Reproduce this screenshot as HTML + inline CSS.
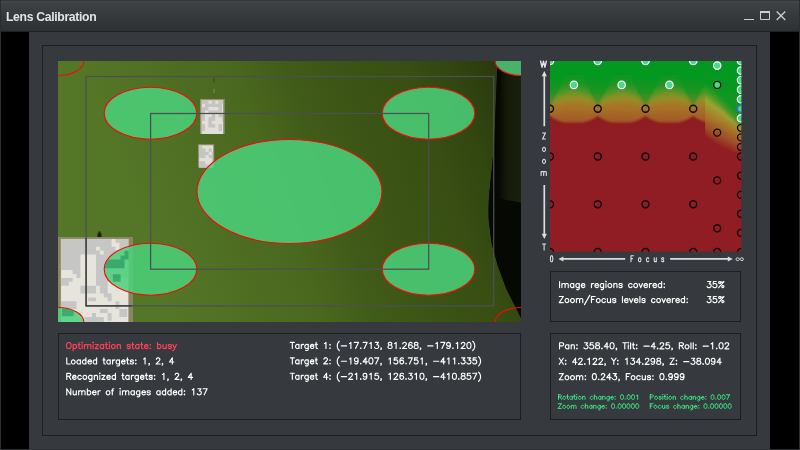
<!DOCTYPE html>
<html><head><meta charset="utf-8"><title>Lens Calibration</title>
<style>
html,body{margin:0;padding:0;background:#2b2e31;}
#bk{position:absolute;left:1px;top:32px;width:798px;height:417px;background:#000;}
body{width:800px;height:450px;position:relative;overflow:hidden;font-family:"Liberation Sans",sans-serif;}
#tb{position:absolute;left:1px;top:0;width:798px;height:32px;background:linear-gradient(#34373a 0px,#34373a 1px,#43474a 1px,#3d4144 4px,#36393c 16px,#2e3134 30px,#2a2d30 31px,#1f2224 31px,#1f2224 32px);}
#ttl{position:absolute;left:6.1px;top:10px;font-size:12.2px;font-weight:bold;color:#e4e4e4;letter-spacing:-0.32px;line-height:14px;white-space:nowrap;will-change:transform;}
#pn{position:absolute;left:29px;top:32px;width:741px;height:417px;background:#363a3e;}
.bx{position:absolute;border:1px solid #1f1e1f;box-sizing:border-box;}
svg{position:absolute;left:0;top:0;}
</style></head><body>
<div id="bk"></div>
<div id="tb"></div>
<div id="ttl">Lens Calibration</div>
<div id="pn"></div>
<div class="bx" style="left:42px;top:45px;width:715px;height:391px"></div>
<div class="bx" style="left:58px;top:333px;width:463px;height:87px"></div>
<div class="bx" style="left:550px;top:271px;width:191px;height:51px"></div>
<div class="bx" style="left:550px;top:333px;width:191px;height:87px"></div>
<svg width="800" height="450" viewBox="0 0 800 450">
<defs>
<clipPath id="ci"><rect x="58" y="61" width="463" height="261"/></clipPath>
<linearGradient id="gbg" gradientUnits="userSpaceOnUse" x1="60" y1="190" x2="487.6" y2="40.3"><stop offset="0.000" stop-color="#547627"/><stop offset="0.146" stop-color="#547627"/><stop offset="0.458" stop-color="#4a671e"/><stop offset="0.562" stop-color="#415b19"/><stop offset="0.677" stop-color="#3c5415"/><stop offset="0.812" stop-color="#384e13"/><stop offset="0.906" stop-color="#324610"/><stop offset="1.000" stop-color="#2b390e"/></linearGradient>
<clipPath id="ce"><ellipse cx="150.5" cy="269.2" rx="45.8" ry="25.5"/><ellipse cx="58" cy="322" rx="25.3" ry="14"/></clipPath>
<linearGradient id="gdk" gradientUnits="userSpaceOnUse" x1="494" y1="0" x2="521" y2="0"><stop offset="0" stop-color="#040602"/><stop offset="0.2" stop-color="#070a04"/><stop offset="0.5" stop-color="#151b0a"/><stop offset="1" stop-color="#1a200d"/></linearGradient>
</defs>
<g clip-path="url(#ci)">
<rect x="58" y="61" width="463" height="261" fill="url(#gbg)"/>
<path d="M497.6 61L521 61L521 318L518.2 312.6L512.4 301L506.6 289.4L498 266.3L491.6 243L488.8 220L488.6 210L488.9 200L490.7 180L492.7 160L494.4 140L496 100L497 76Z" fill="url(#gdk)"/>
<path d="M497.6 61L501.5 61L499 100L498 140L496 180L494.2 197.8L521 202.7L521 318L518.2 312.6L512.4 301L506.6 289.4L498 266.3L491.6 243L488.8 220L488.6 210L488.9 200L490.7 180L492.7 160L494.4 140L496 100L497 76Z" fill="#050803"/>
<rect x="58" y="237" width="75" height="86" fill="#8b8562"/><rect x="60.9" y="238.9" width="67.5" height="84.1" fill="#e7e4dc"/><path d="M60.9 238.9h3.9v3.9h-3.9zM64.8 238.9h3.9v3.9h-3.9zM68.7 238.9h3.9v3.9h-3.9zM72.6 238.9h3.9v3.9h-3.9zM76.5 238.9h3.9v3.9h-3.9zM80.4 238.9h3.9v3.9h-3.9zM84.3 238.9h3.9v3.9h-3.9zM88.2 238.9h3.9v3.9h-3.9zM92.1 238.9h3.9v3.9h-3.9zM96.0 238.9h3.9v3.9h-3.9zM99.9 238.9h3.9v3.9h-3.9zM103.8 238.9h3.9v3.9h-3.9zM107.7 238.9h3.9v3.9h-3.9zM115.5 238.9h3.9v3.9h-3.9zM119.4 238.9h3.9v3.9h-3.9zM123.3 238.9h3.9v3.9h-3.9zM127.2 238.9h1.2v3.9h-1.2zM60.9 242.8h3.9v3.9h-3.9zM64.8 242.8h3.9v3.9h-3.9zM68.7 242.8h3.9v3.9h-3.9zM72.6 242.8h3.9v3.9h-3.9zM76.5 242.8h3.9v3.9h-3.9zM80.4 242.8h3.9v3.9h-3.9zM84.3 242.8h3.9v3.9h-3.9zM88.2 242.8h3.9v3.9h-3.9zM92.1 242.8h3.9v3.9h-3.9zM96.0 242.8h3.9v3.9h-3.9zM99.9 242.8h3.9v3.9h-3.9zM103.8 242.8h3.9v3.9h-3.9zM107.7 242.8h3.9v3.9h-3.9zM119.4 242.8h3.9v3.9h-3.9zM123.3 242.8h3.9v3.9h-3.9zM127.2 242.8h1.2v3.9h-1.2zM60.9 246.7h3.9v3.9h-3.9zM64.8 246.7h3.9v3.9h-3.9zM68.7 246.7h3.9v3.9h-3.9zM72.6 246.7h3.9v3.9h-3.9zM76.5 246.7h3.9v3.9h-3.9zM80.4 246.7h3.9v3.9h-3.9zM84.3 246.7h3.9v3.9h-3.9zM88.2 246.7h3.9v3.9h-3.9zM92.1 246.7h3.9v3.9h-3.9zM99.9 246.7h3.9v3.9h-3.9zM103.8 246.7h3.9v3.9h-3.9zM107.7 246.7h3.9v3.9h-3.9zM111.6 246.7h3.9v3.9h-3.9zM119.4 246.7h3.9v3.9h-3.9zM123.3 246.7h3.9v3.9h-3.9zM127.2 246.7h1.2v3.9h-1.2zM60.9 250.6h3.9v3.9h-3.9zM64.8 250.6h3.9v3.9h-3.9zM68.7 250.6h3.9v3.9h-3.9zM72.6 250.6h3.9v3.9h-3.9zM76.5 250.6h3.9v3.9h-3.9zM80.4 250.6h3.9v3.9h-3.9zM84.3 250.6h3.9v3.9h-3.9zM88.2 250.6h3.9v3.9h-3.9zM92.1 250.6h3.9v3.9h-3.9zM96.0 250.6h3.9v3.9h-3.9zM103.8 250.6h3.9v3.9h-3.9zM107.7 250.6h3.9v3.9h-3.9zM111.6 250.6h3.9v3.9h-3.9zM115.5 250.6h3.9v3.9h-3.9zM119.4 250.6h3.9v3.9h-3.9zM123.3 250.6h3.9v3.9h-3.9zM127.2 250.6h1.2v3.9h-1.2zM60.9 254.5h3.9v3.9h-3.9zM64.8 254.5h3.9v3.9h-3.9zM68.7 254.5h3.9v3.9h-3.9zM72.6 254.5h3.9v3.9h-3.9zM76.5 254.5h3.9v3.9h-3.9zM96.0 254.5h3.9v3.9h-3.9zM99.9 254.5h3.9v3.9h-3.9zM103.8 254.5h3.9v3.9h-3.9zM107.7 254.5h3.9v3.9h-3.9zM111.6 254.5h3.9v3.9h-3.9zM115.5 254.5h3.9v3.9h-3.9zM119.4 254.5h3.9v3.9h-3.9zM123.3 254.5h3.9v3.9h-3.9zM127.2 254.5h1.2v3.9h-1.2zM60.9 258.4h3.9v3.9h-3.9zM64.8 258.4h3.9v3.9h-3.9zM68.7 258.4h3.9v3.9h-3.9zM72.6 258.4h3.9v3.9h-3.9zM76.5 258.4h3.9v3.9h-3.9zM96.0 258.4h3.9v3.9h-3.9zM99.9 258.4h3.9v3.9h-3.9zM103.8 258.4h3.9v3.9h-3.9zM107.7 258.4h3.9v3.9h-3.9zM111.6 258.4h3.9v3.9h-3.9zM115.5 258.4h3.9v3.9h-3.9zM119.4 258.4h3.9v3.9h-3.9zM123.3 258.4h3.9v3.9h-3.9zM127.2 258.4h1.2v3.9h-1.2zM60.9 262.3h3.9v3.9h-3.9zM64.8 262.3h3.9v3.9h-3.9zM68.7 262.3h3.9v3.9h-3.9zM72.6 262.3h3.9v3.9h-3.9zM76.5 262.3h3.9v3.9h-3.9zM96.0 262.3h3.9v3.9h-3.9zM99.9 262.3h3.9v3.9h-3.9zM103.8 262.3h3.9v3.9h-3.9zM107.7 262.3h3.9v3.9h-3.9zM111.6 262.3h3.9v3.9h-3.9zM115.5 262.3h3.9v3.9h-3.9zM119.4 262.3h3.9v3.9h-3.9zM123.3 262.3h3.9v3.9h-3.9zM127.2 262.3h1.2v3.9h-1.2zM60.9 266.2h3.9v3.9h-3.9zM64.8 266.2h3.9v3.9h-3.9zM68.7 266.2h3.9v3.9h-3.9zM72.6 266.2h3.9v3.9h-3.9zM76.5 266.2h3.9v3.9h-3.9zM96.0 266.2h3.9v3.9h-3.9zM99.9 266.2h3.9v3.9h-3.9zM103.8 266.2h3.9v3.9h-3.9zM107.7 266.2h3.9v3.9h-3.9zM111.6 266.2h3.9v3.9h-3.9zM115.5 266.2h3.9v3.9h-3.9zM119.4 266.2h3.9v3.9h-3.9zM123.3 266.2h3.9v3.9h-3.9zM127.2 266.2h1.2v3.9h-1.2zM72.6 270.1h3.9v3.9h-3.9zM76.5 270.1h3.9v3.9h-3.9zM96.0 270.1h3.9v3.9h-3.9zM99.9 270.1h3.9v3.9h-3.9zM103.8 270.1h3.9v3.9h-3.9zM107.7 270.1h3.9v3.9h-3.9zM111.6 270.1h3.9v3.9h-3.9zM115.5 270.1h3.9v3.9h-3.9zM119.4 270.1h3.9v3.9h-3.9zM123.3 270.1h3.9v3.9h-3.9zM127.2 270.1h1.2v3.9h-1.2zM76.5 274.0h3.9v3.9h-3.9zM96.0 274.0h3.9v3.9h-3.9zM99.9 274.0h3.9v3.9h-3.9zM103.8 274.0h3.9v3.9h-3.9zM107.7 274.0h3.9v3.9h-3.9zM111.6 274.0h3.9v3.9h-3.9zM115.5 274.0h3.9v3.9h-3.9zM119.4 274.0h3.9v3.9h-3.9zM123.3 274.0h3.9v3.9h-3.9zM127.2 274.0h1.2v3.9h-1.2zM60.9 277.9h3.9v3.9h-3.9zM64.8 277.9h3.9v3.9h-3.9zM68.7 277.9h3.9v3.9h-3.9zM96.0 277.9h3.9v3.9h-3.9zM99.9 277.9h3.9v3.9h-3.9zM103.8 277.9h3.9v3.9h-3.9zM107.7 277.9h3.9v3.9h-3.9zM60.9 281.8h3.9v3.9h-3.9zM64.8 281.8h3.9v3.9h-3.9zM96.0 281.8h3.9v3.9h-3.9zM99.9 281.8h3.9v3.9h-3.9zM103.8 281.8h3.9v3.9h-3.9zM80.4 285.7h3.9v3.9h-3.9zM84.3 285.7h3.9v3.9h-3.9zM88.2 285.7h3.9v3.9h-3.9zM92.1 285.7h3.9v3.9h-3.9zM99.9 285.7h3.9v3.9h-3.9zM103.8 285.7h3.9v3.9h-3.9zM80.4 289.6h3.9v3.9h-3.9zM84.3 289.6h3.9v3.9h-3.9zM88.2 289.6h3.9v3.9h-3.9zM92.1 289.6h3.9v3.9h-3.9zM99.9 289.6h3.9v3.9h-3.9zM103.8 289.6h3.9v3.9h-3.9zM103.8 293.5h3.9v3.9h-3.9zM107.7 293.5h3.9v3.9h-3.9zM88.2 297.4h3.9v3.9h-3.9zM92.1 297.4h3.9v3.9h-3.9zM107.7 297.4h3.9v3.9h-3.9zM60.9 301.3h3.9v3.9h-3.9zM64.8 301.3h3.9v3.9h-3.9zM68.7 301.3h3.9v3.9h-3.9zM72.6 301.3h3.9v3.9h-3.9zM115.5 301.3h3.9v3.9h-3.9zM60.9 305.2h3.9v3.9h-3.9zM64.8 305.2h3.9v3.9h-3.9zM68.7 305.2h3.9v3.9h-3.9zM72.6 305.2h3.9v3.9h-3.9zM115.5 305.2h3.9v3.9h-3.9zM99.9 309.1h3.9v3.9h-3.9zM103.8 309.1h3.9v3.9h-3.9zM119.4 309.1h3.9v3.9h-3.9zM123.3 309.1h3.9v3.9h-3.9zM92.1 313.0h3.9v3.9h-3.9zM107.7 313.0h3.9v3.9h-3.9zM119.4 313.0h3.9v3.9h-3.9zM123.3 313.0h3.9v3.9h-3.9zM84.3 316.9h3.9v3.9h-3.9zM88.2 316.9h3.9v3.9h-3.9zM92.1 316.9h3.9v3.9h-3.9zM96.0 316.9h3.9v3.9h-3.9zM99.9 316.9h3.9v3.9h-3.9zM107.7 316.9h3.9v3.9h-3.9zM84.3 320.8h3.9v2.2h-3.9zM88.2 320.8h3.9v2.2h-3.9zM92.1 320.8h3.9v2.2h-3.9zM96.0 320.8h3.9v2.2h-3.9zM99.9 320.8h3.9v2.2h-3.9z" fill="#c6c6c4"/>
<rect x="200" y="99" width="24.7" height="35" fill="#979176"/><rect x="201.6" y="100.3" width="21.5" height="33.7" fill="#e1dfd9"/><path d="M201.6 100.3h3.4v3.4h-3.4zM205.0 100.3h3.4v3.4h-3.4zM211.8 100.3h3.4v3.4h-3.4zM218.6 100.3h3.4v3.4h-3.4zM222.0 100.3h1.1v3.4h-1.1zM205.0 103.7h3.4v3.4h-3.4zM208.4 103.7h3.4v3.4h-3.4zM211.8 103.7h3.4v3.4h-3.4zM215.2 103.7h3.4v3.4h-3.4zM218.6 103.7h3.4v3.4h-3.4zM201.6 107.1h3.4v3.4h-3.4zM205.0 107.1h3.4v3.4h-3.4zM218.6 107.1h3.4v3.4h-3.4zM201.6 110.5h3.4v3.4h-3.4zM208.4 110.5h3.4v3.4h-3.4zM211.8 110.5h3.4v3.4h-3.4zM215.2 110.5h3.4v3.4h-3.4zM218.6 110.5h3.4v3.4h-3.4zM201.6 113.9h3.4v3.4h-3.4zM211.8 113.9h3.4v3.4h-3.4zM218.6 113.9h3.4v3.4h-3.4zM222.0 113.9h1.1v3.4h-1.1zM201.6 117.3h3.4v3.4h-3.4zM208.4 117.3h3.4v3.4h-3.4zM211.8 117.3h3.4v3.4h-3.4zM222.0 117.3h1.1v3.4h-1.1zM208.4 120.7h3.4v3.4h-3.4zM201.6 124.1h3.4v3.4h-3.4zM208.4 124.1h3.4v3.4h-3.4zM211.8 124.1h3.4v3.4h-3.4zM218.6 124.1h3.4v3.4h-3.4zM201.6 127.5h3.4v3.4h-3.4zM218.6 127.5h3.4v3.4h-3.4z" fill="#c5c4c1"/>
<rect x="198" y="144.2" width="16.2" height="23.3" fill="#979176"/><rect x="199.1" y="145.3" width="14" height="22.2" fill="#e1dfd9"/><path d="M199.1 145.3h3.2v3.2h-3.2zM199.1 148.5h3.2v3.2h-3.2zM202.3 148.5h3.2v3.2h-3.2zM208.7 148.5h3.2v3.2h-3.2zM199.1 151.7h3.2v3.2h-3.2zM202.3 151.7h3.2v3.2h-3.2zM205.5 151.7h3.2v3.2h-3.2zM211.9 151.7h1.2v3.2h-1.2zM199.1 154.9h3.2v3.2h-3.2zM202.3 154.9h3.2v3.2h-3.2zM208.7 154.9h3.2v3.2h-3.2zM211.9 154.9h1.2v3.2h-1.2zM211.9 158.1h1.2v3.2h-1.2zM199.1 161.3h3.2v3.2h-3.2zM202.3 161.3h3.2v3.2h-3.2zM211.9 161.3h1.2v3.2h-1.2zM199.1 164.5h3.2v3.0h-3.2zM202.3 164.5h3.2v3.0h-3.2zM205.5 164.5h3.2v3.0h-3.2z" fill="#c5c4c1"/>
<rect x="213" y="78" width="2" height="4.5" fill="#475022"/><rect x="213.4" y="89" width="1.4" height="4" fill="#6f8340"/>
<path d="M97.5 237V233.5H98.5V231.5H100.5V233.5H101.5V237Z" fill="#1c1c14"/>
<ellipse cx="150.5" cy="113.2" rx="46.3" ry="26" fill="rgba(75,210,123,0.85)" stroke="#f80808" stroke-width="1.1"/>
<ellipse cx="428.5" cy="113.2" rx="46.3" ry="26" fill="rgba(75,210,123,0.85)" stroke="#f80808" stroke-width="1.1"/>
<ellipse cx="150.5" cy="269.2" rx="46.3" ry="26" fill="rgba(75,210,123,0.85)" stroke="#f80808" stroke-width="1.1"/>
<ellipse cx="428.5" cy="269.2" rx="46.3" ry="26" fill="rgba(75,210,123,0.85)" stroke="#f80808" stroke-width="1.1"/>
<ellipse cx="289.5" cy="191.5" rx="92.5" ry="52" fill="rgba(75,210,123,0.85)" stroke="#f80808" stroke-width="1.1"/>
<ellipse cx="58" cy="61" rx="25.8" ry="14.5" fill="none" stroke="#f80808" stroke-width="1.1"/>
<ellipse cx="521" cy="61" rx="25.8" ry="14.5" fill="#46b26c" stroke="#f80808" stroke-width="1.1"/>
<ellipse cx="58" cy="322" rx="25.8" ry="14.5" fill="rgba(75,210,123,0.85)" stroke="#f80808" stroke-width="1.1"/>
<ellipse cx="521" cy="322" rx="25.8" ry="14.5" fill="none" stroke="#f80808" stroke-width="1.1"/>
<path d="M124.5 250.7h4v5h-4zM120.6 255.6h7.9v4h-7.9zM105 259.5h19.5v8.8h-19.5zM112.8 274.2h7.8v7.5h-7.8zM62 308.3h11.7v7.9h-11.7z" fill="#0e7a50" opacity="0.45" clip-path="url(#ce)"/>
<g fill="none" stroke="#4b5152" stroke-width="1.25"><rect x="86.1" y="76.5" width="407.6" height="229.4"/><rect x="150.6" y="113.5" width="278.1" height="155.7"/></g>
<path d="M86.1 238V305.9H132" fill="none" stroke="#3e3e3c" stroke-width="1.3"/>
</g>
<defs>
<clipPath id="ch"><rect x="550" y="61" width="191.3" height="190.8"/></clipPath>
<linearGradient id="pa" gradientUnits="userSpaceOnUse" x1="0" y1="61" x2="0" y2="125"><stop offset="0.000" stop-color="#059821"/><stop offset="0.266" stop-color="#059821"/><stop offset="0.484" stop-color="#1e9421"/><stop offset="0.609" stop-color="#508c22"/><stop offset="0.734" stop-color="#827a23"/><stop offset="0.852" stop-color="#926424"/><stop offset="0.867" stop-color="#8f1d23"/><stop offset="1.000" stop-color="#8f1d23"/></linearGradient>
<linearGradient id="pb" gradientUnits="userSpaceOnUse" x1="0" y1="61" x2="0" y2="125"><stop offset="0.000" stop-color="#059821"/><stop offset="0.188" stop-color="#059821"/><stop offset="0.359" stop-color="#229624"/><stop offset="0.453" stop-color="#4e9626"/><stop offset="0.516" stop-color="#7a9328"/><stop offset="0.578" stop-color="#968d28"/><stop offset="0.656" stop-color="#a47c28"/><stop offset="0.766" stop-color="#a86e28"/><stop offset="0.891" stop-color="#a45f28"/><stop offset="0.984" stop-color="#a05626"/><stop offset="1.000" stop-color="#8f1d23"/></linearGradient>
<radialGradient id="pbr" gradientUnits="userSpaceOnUse" cx="0" cy="125" r="60"><stop offset="0.000" stop-color="#a05626"/><stop offset="0.117" stop-color="#a45f28"/><stop offset="0.250" stop-color="#a86e28"/><stop offset="0.367" stop-color="#a47c28"/><stop offset="0.450" stop-color="#968d28"/><stop offset="0.517" stop-color="#7a9328"/><stop offset="0.583" stop-color="#4e9626"/><stop offset="0.683" stop-color="#229624"/><stop offset="0.850" stop-color="#059821"/><stop offset="1.000" stop-color="#059821"/></radialGradient>
<linearGradient id="mg" gradientUnits="userSpaceOnUse" x1="0" y1="96" x2="0" y2="110"><stop offset="0" stop-color="#fff"/><stop offset="1" stop-color="#000"/></linearGradient><mask id="mk" maskUnits="userSpaceOnUse" x="540" y="55" width="210" height="80"><rect x="540" y="55" width="210" height="80" fill="url(#mg)"/></mask>
<radialGradient id="pr" gradientUnits="userSpaceOnUse" cx="760" cy="70" r="90"><stop offset="0.000" stop-color="#059821"/><stop offset="0.533" stop-color="#059821"/><stop offset="0.600" stop-color="#469826"/><stop offset="0.667" stop-color="#969628"/><stop offset="0.756" stop-color="#b07828"/><stop offset="0.856" stop-color="#a85528"/><stop offset="0.922" stop-color="#8f1d23"/><stop offset="1.000" stop-color="#8f1d23"/></radialGradient>
<filter id="bl" x="-10%" y="-10%" width="120%" height="120%"><feGaussianBlur stdDeviation="0.8"/></filter>
</defs>
<g clip-path="url(#ch)">
<rect x="550" y="61" width="192" height="191" fill="#8f1d23"/>
<rect x="550" y="61" width="192" height="64" fill="url(#pa)"/>
<g filter="url(#bl)">
<path d="M550.0 116.0L550.0 107.5L566.9 74.0L570.4 72.8L573.9 72.5L577.4 72.8L580.9 74.0L597.8 107.5L597.8 116.0L597.8 126.0L550.0 126.0Z" fill="url(#pb)"/>
<path d="M597.7 116.0L597.7 107.5L614.6 74.0L618.1 72.8L621.6 72.5L625.1 72.8L628.6 74.0L645.5 107.5L645.5 116.0L645.5 126.0L597.7 126.0Z" fill="url(#pb)"/>
<path d="M645.5 116.0L645.5 107.5L662.4 74.0L665.9 72.8L669.4 72.5L672.9 72.8L676.4 74.0L693.3 107.5L693.3 116.0L693.3 126.0L645.5 126.0Z" fill="url(#pb)"/>
<path d="M693.2 116.0L693.2 107.5L710.1 74.0L713.6 72.8L717.1 72.5L720.6 72.8L724.1 74.0L741.0 107.5L741.0 116.0L741.0 126.0L693.2 126.0Z" fill="url(#pb)"/>
<g mask="url(#mk)">
<path transform="translate(573.9 0)" d="M-23.9 116.0L-23.9 107.5L-7.0 74.0L-3.5 72.8L0.0 72.5L3.5 72.8L7.0 74.0L23.9 107.5L23.9 116.0L23.9 126.0L-23.9 126.0Z" fill="url(#pbr)"/>
<path transform="translate(621.6 0)" d="M-23.9 116.0L-23.9 107.5L-7.0 74.0L-3.5 72.8L0.0 72.5L3.5 72.8L7.0 74.0L23.9 107.5L23.9 116.0L23.9 126.0L-23.9 126.0Z" fill="url(#pbr)"/>
<path transform="translate(669.4 0)" d="M-23.9 116.0L-23.9 107.5L-7.0 74.0L-3.5 72.8L0.0 72.5L3.5 72.8L7.0 74.0L23.9 107.5L23.9 116.0L23.9 126.0L-23.9 126.0Z" fill="url(#pbr)"/>
<path transform="translate(717.1 0)" d="M-23.9 116.0L-23.9 107.5L-7.0 74.0L-3.5 72.8L0.0 72.5L3.5 72.8L7.0 74.0L23.9 107.5L23.9 116.0L23.9 126.0L-23.9 126.0Z" fill="url(#pbr)"/>
</g>
<path d="M550.0 115.5C558.9 122.5 565.9 122.3 573.9 122.3S588.9 122.5 597.8 115.5V128H550.0ZM597.7 115.5C606.6 122.5 613.6 122.3 621.6 122.3S636.6 122.5 645.5 115.5V128H597.7ZM645.5 115.5C654.4 122.5 661.4 122.3 669.4 122.3S684.4 122.5 693.3 115.5V128H645.5ZM693.2 115.5C702.1 122.5 709.1 122.3 717.1 122.3S732.1 122.5 741.0 115.5V128H693.2Z" fill="#8f1d23"/>
</g>
<defs><linearGradient id="s0" gradientUnits="userSpaceOnUse" x1="0" y1="61" x2="0" y2="165"><stop offset="0.000" stop-color="#059821"/><stop offset="0.216" stop-color="#059821"/><stop offset="0.293" stop-color="#3c9c26"/><stop offset="0.379" stop-color="#9ca632"/><stop offset="0.514" stop-color="#a87c2a"/><stop offset="0.639" stop-color="#a05427"/><stop offset="0.735" stop-color="#8f1d23"/><stop offset="1.000" stop-color="#8f1d23"/></linearGradient><linearGradient id="s1" gradientUnits="userSpaceOnUse" x1="0" y1="61" x2="0" y2="165"><stop offset="0.000" stop-color="#059821"/><stop offset="0.222" stop-color="#059821"/><stop offset="0.299" stop-color="#3c9c26"/><stop offset="0.386" stop-color="#9ca632"/><stop offset="0.521" stop-color="#a87c2a"/><stop offset="0.646" stop-color="#a05427"/><stop offset="0.742" stop-color="#8f1d23"/><stop offset="1.000" stop-color="#8f1d23"/></linearGradient><linearGradient id="s2" gradientUnits="userSpaceOnUse" x1="0" y1="61" x2="0" y2="165"><stop offset="0.000" stop-color="#059821"/><stop offset="0.229" stop-color="#059821"/><stop offset="0.306" stop-color="#3c9c26"/><stop offset="0.392" stop-color="#9ca632"/><stop offset="0.527" stop-color="#a87c2a"/><stop offset="0.652" stop-color="#a05427"/><stop offset="0.748" stop-color="#8f1d23"/><stop offset="1.000" stop-color="#8f1d23"/></linearGradient><linearGradient id="s3" gradientUnits="userSpaceOnUse" x1="0" y1="61" x2="0" y2="165"><stop offset="0.000" stop-color="#059821"/><stop offset="0.235" stop-color="#059821"/><stop offset="0.312" stop-color="#3c9c26"/><stop offset="0.399" stop-color="#9ca632"/><stop offset="0.533" stop-color="#a87c2a"/><stop offset="0.658" stop-color="#a05427"/><stop offset="0.754" stop-color="#8f1d23"/><stop offset="1.000" stop-color="#8f1d23"/></linearGradient><linearGradient id="s4" gradientUnits="userSpaceOnUse" x1="0" y1="61" x2="0" y2="165"><stop offset="0.000" stop-color="#059821"/><stop offset="0.242" stop-color="#059821"/><stop offset="0.319" stop-color="#3c9c26"/><stop offset="0.405" stop-color="#9ca632"/><stop offset="0.540" stop-color="#a87c2a"/><stop offset="0.665" stop-color="#a05427"/><stop offset="0.761" stop-color="#8f1d23"/><stop offset="1.000" stop-color="#8f1d23"/></linearGradient><linearGradient id="s5" gradientUnits="userSpaceOnUse" x1="0" y1="61" x2="0" y2="165"><stop offset="0.000" stop-color="#059821"/><stop offset="0.248" stop-color="#059821"/><stop offset="0.325" stop-color="#3c9c26"/><stop offset="0.412" stop-color="#9ca632"/><stop offset="0.546" stop-color="#a87c2a"/><stop offset="0.671" stop-color="#a05427"/><stop offset="0.767" stop-color="#8f1d23"/><stop offset="1.000" stop-color="#8f1d23"/></linearGradient><linearGradient id="s6" gradientUnits="userSpaceOnUse" x1="0" y1="61" x2="0" y2="165"><stop offset="0.000" stop-color="#059821"/><stop offset="0.256" stop-color="#059821"/><stop offset="0.333" stop-color="#3c9c26"/><stop offset="0.419" stop-color="#9ca632"/><stop offset="0.553" stop-color="#a87c2a"/><stop offset="0.676" stop-color="#a05427"/><stop offset="0.774" stop-color="#8f1d23"/><stop offset="1.000" stop-color="#8f1d23"/></linearGradient><linearGradient id="s7" gradientUnits="userSpaceOnUse" x1="0" y1="61" x2="0" y2="165"><stop offset="0.000" stop-color="#059821"/><stop offset="0.264" stop-color="#059821"/><stop offset="0.341" stop-color="#3c9c26"/><stop offset="0.426" stop-color="#9ca632"/><stop offset="0.559" stop-color="#a87c2a"/><stop offset="0.681" stop-color="#a05427"/><stop offset="0.780" stop-color="#8f1d23"/><stop offset="1.000" stop-color="#8f1d23"/></linearGradient><linearGradient id="s8" gradientUnits="userSpaceOnUse" x1="0" y1="61" x2="0" y2="165"><stop offset="0.000" stop-color="#059821"/><stop offset="0.272" stop-color="#059821"/><stop offset="0.349" stop-color="#3c9c26"/><stop offset="0.433" stop-color="#9ca632"/><stop offset="0.565" stop-color="#a87c2a"/><stop offset="0.686" stop-color="#a05427"/><stop offset="0.787" stop-color="#8f1d23"/><stop offset="1.000" stop-color="#8f1d23"/></linearGradient><linearGradient id="s9" gradientUnits="userSpaceOnUse" x1="0" y1="61" x2="0" y2="165"><stop offset="0.000" stop-color="#059821"/><stop offset="0.280" stop-color="#059821"/><stop offset="0.357" stop-color="#3c9c26"/><stop offset="0.440" stop-color="#9ca632"/><stop offset="0.572" stop-color="#a87c2a"/><stop offset="0.691" stop-color="#a05427"/><stop offset="0.793" stop-color="#8f1d23"/><stop offset="1.000" stop-color="#8f1d23"/></linearGradient><linearGradient id="s10" gradientUnits="userSpaceOnUse" x1="0" y1="61" x2="0" y2="165"><stop offset="0.000" stop-color="#059821"/><stop offset="0.288" stop-color="#059821"/><stop offset="0.365" stop-color="#3c9c26"/><stop offset="0.447" stop-color="#9ca632"/><stop offset="0.578" stop-color="#a87c2a"/><stop offset="0.696" stop-color="#a05427"/><stop offset="0.799" stop-color="#8f1d23"/><stop offset="1.000" stop-color="#8f1d23"/></linearGradient><linearGradient id="s11" gradientUnits="userSpaceOnUse" x1="0" y1="61" x2="0" y2="165"><stop offset="0.000" stop-color="#059821"/><stop offset="0.296" stop-color="#059821"/><stop offset="0.373" stop-color="#3c9c26"/><stop offset="0.455" stop-color="#9ca632"/><stop offset="0.585" stop-color="#a87c2a"/><stop offset="0.700" stop-color="#a05427"/><stop offset="0.806" stop-color="#8f1d23"/><stop offset="1.000" stop-color="#8f1d23"/></linearGradient><linearGradient id="s12" gradientUnits="userSpaceOnUse" x1="0" y1="61" x2="0" y2="165"><stop offset="0.000" stop-color="#059821"/><stop offset="0.305" stop-color="#059821"/><stop offset="0.382" stop-color="#3c9c26"/><stop offset="0.462" stop-color="#9ca632"/><stop offset="0.590" stop-color="#a87c2a"/><stop offset="0.705" stop-color="#a05427"/><stop offset="0.811" stop-color="#8f1d23"/><stop offset="1.000" stop-color="#8f1d23"/></linearGradient><linearGradient id="s13" gradientUnits="userSpaceOnUse" x1="0" y1="61" x2="0" y2="165"><stop offset="0.000" stop-color="#059821"/><stop offset="0.314" stop-color="#059821"/><stop offset="0.391" stop-color="#3c9c26"/><stop offset="0.469" stop-color="#9ca632"/><stop offset="0.595" stop-color="#a87c2a"/><stop offset="0.710" stop-color="#a05427"/><stop offset="0.816" stop-color="#8f1d23"/><stop offset="1.000" stop-color="#8f1d23"/></linearGradient><linearGradient id="s14" gradientUnits="userSpaceOnUse" x1="0" y1="61" x2="0" y2="165"><stop offset="0.000" stop-color="#059821"/><stop offset="0.324" stop-color="#059821"/><stop offset="0.401" stop-color="#3c9c26"/><stop offset="0.476" stop-color="#9ca632"/><stop offset="0.600" stop-color="#a87c2a"/><stop offset="0.715" stop-color="#a05427"/><stop offset="0.821" stop-color="#8f1d23"/><stop offset="1.000" stop-color="#8f1d23"/></linearGradient><linearGradient id="s15" gradientUnits="userSpaceOnUse" x1="0" y1="61" x2="0" y2="165"><stop offset="0.000" stop-color="#059821"/><stop offset="0.334" stop-color="#059821"/><stop offset="0.411" stop-color="#3c9c26"/><stop offset="0.483" stop-color="#9ca632"/><stop offset="0.604" stop-color="#a87c2a"/><stop offset="0.720" stop-color="#a05427"/><stop offset="0.825" stop-color="#8f1d23"/><stop offset="1.000" stop-color="#8f1d23"/></linearGradient><linearGradient id="s16" gradientUnits="userSpaceOnUse" x1="0" y1="61" x2="0" y2="165"><stop offset="0.000" stop-color="#059821"/><stop offset="0.343" stop-color="#059821"/><stop offset="0.420" stop-color="#3c9c26"/><stop offset="0.491" stop-color="#9ca632"/><stop offset="0.609" stop-color="#a87c2a"/><stop offset="0.725" stop-color="#a05427"/><stop offset="0.830" stop-color="#8f1d23"/><stop offset="1.000" stop-color="#8f1d23"/></linearGradient><linearGradient id="s17" gradientUnits="userSpaceOnUse" x1="0" y1="61" x2="0" y2="165"><stop offset="0.000" stop-color="#059821"/><stop offset="0.353" stop-color="#059821"/><stop offset="0.430" stop-color="#3c9c26"/><stop offset="0.498" stop-color="#9ca632"/><stop offset="0.614" stop-color="#a87c2a"/><stop offset="0.729" stop-color="#a05427"/><stop offset="0.835" stop-color="#8f1d23"/><stop offset="1.000" stop-color="#8f1d23"/></linearGradient><linearGradient id="s18" gradientUnits="userSpaceOnUse" x1="0" y1="61" x2="0" y2="165"><stop offset="0.000" stop-color="#059821"/><stop offset="0.363" stop-color="#059821"/><stop offset="0.439" stop-color="#3c9c26"/><stop offset="0.506" stop-color="#9ca632"/><stop offset="0.620" stop-color="#a87c2a"/><stop offset="0.734" stop-color="#a05427"/><stop offset="0.840" stop-color="#8f1d23"/><stop offset="1.000" stop-color="#8f1d23"/></linearGradient><linearGradient id="s19" gradientUnits="userSpaceOnUse" x1="0" y1="61" x2="0" y2="165"><stop offset="0.000" stop-color="#059821"/><stop offset="0.372" stop-color="#059821"/><stop offset="0.449" stop-color="#3c9c26"/><stop offset="0.514" stop-color="#9ca632"/><stop offset="0.626" stop-color="#a87c2a"/><stop offset="0.739" stop-color="#a05427"/><stop offset="0.845" stop-color="#8f1d23"/><stop offset="1.000" stop-color="#8f1d23"/></linearGradient><linearGradient id="s20" gradientUnits="userSpaceOnUse" x1="0" y1="61" x2="0" y2="165"><stop offset="0.000" stop-color="#059821"/><stop offset="0.382" stop-color="#059821"/><stop offset="0.459" stop-color="#3c9c26"/><stop offset="0.522" stop-color="#9ca632"/><stop offset="0.633" stop-color="#a87c2a"/><stop offset="0.744" stop-color="#a05427"/><stop offset="0.850" stop-color="#8f1d23"/><stop offset="1.000" stop-color="#8f1d23"/></linearGradient><linearGradient id="s21" gradientUnits="userSpaceOnUse" x1="0" y1="61" x2="0" y2="165"><stop offset="0.000" stop-color="#059821"/><stop offset="0.391" stop-color="#059821"/><stop offset="0.468" stop-color="#3c9c26"/><stop offset="0.530" stop-color="#9ca632"/><stop offset="0.639" stop-color="#a87c2a"/><stop offset="0.749" stop-color="#a05427"/><stop offset="0.854" stop-color="#8f1d23"/><stop offset="1.000" stop-color="#8f1d23"/></linearGradient><linearGradient id="s22" gradientUnits="userSpaceOnUse" x1="0" y1="61" x2="0" y2="165"><stop offset="0.000" stop-color="#059821"/><stop offset="0.401" stop-color="#059821"/><stop offset="0.478" stop-color="#3c9c26"/><stop offset="0.538" stop-color="#9ca632"/><stop offset="0.646" stop-color="#a87c2a"/><stop offset="0.753" stop-color="#a05427"/><stop offset="0.859" stop-color="#8f1d23"/><stop offset="1.000" stop-color="#8f1d23"/></linearGradient><linearGradient id="s23" gradientUnits="userSpaceOnUse" x1="0" y1="61" x2="0" y2="165"><stop offset="0.000" stop-color="#059821"/><stop offset="0.411" stop-color="#059821"/><stop offset="0.488" stop-color="#3c9c26"/><stop offset="0.546" stop-color="#9ca632"/><stop offset="0.652" stop-color="#a87c2a"/><stop offset="0.758" stop-color="#a05427"/><stop offset="0.864" stop-color="#8f1d23"/><stop offset="1.000" stop-color="#8f1d23"/></linearGradient><linearGradient id="s24" gradientUnits="userSpaceOnUse" x1="0" y1="61" x2="0" y2="165"><stop offset="0.000" stop-color="#059821"/><stop offset="0.420" stop-color="#059821"/><stop offset="0.497" stop-color="#3c9c26"/><stop offset="0.554" stop-color="#9ca632"/><stop offset="0.657" stop-color="#a87c2a"/><stop offset="0.763" stop-color="#a05427"/><stop offset="0.869" stop-color="#8f1d23"/><stop offset="1.000" stop-color="#8f1d23"/></linearGradient><linearGradient id="s25" gradientUnits="userSpaceOnUse" x1="0" y1="61" x2="0" y2="165"><stop offset="0.000" stop-color="#059821"/><stop offset="0.430" stop-color="#059821"/><stop offset="0.507" stop-color="#3c9c26"/><stop offset="0.562" stop-color="#9ca632"/><stop offset="0.662" stop-color="#a87c2a"/><stop offset="0.768" stop-color="#a05427"/><stop offset="0.874" stop-color="#8f1d23"/><stop offset="1.000" stop-color="#8f1d23"/></linearGradient><linearGradient id="s26" gradientUnits="userSpaceOnUse" x1="0" y1="61" x2="0" y2="165"><stop offset="0.000" stop-color="#059821"/><stop offset="0.439" stop-color="#059821"/><stop offset="0.516" stop-color="#3c9c26"/><stop offset="0.570" stop-color="#9ca632"/><stop offset="0.667" stop-color="#a87c2a"/><stop offset="0.773" stop-color="#a05427"/><stop offset="0.878" stop-color="#8f1d23"/><stop offset="1.000" stop-color="#8f1d23"/></linearGradient><linearGradient id="s27" gradientUnits="userSpaceOnUse" x1="0" y1="61" x2="0" y2="165"><stop offset="0.000" stop-color="#059821"/><stop offset="0.449" stop-color="#059821"/><stop offset="0.526" stop-color="#3c9c26"/><stop offset="0.578" stop-color="#9ca632"/><stop offset="0.672" stop-color="#a87c2a"/><stop offset="0.777" stop-color="#a05427"/><stop offset="0.883" stop-color="#8f1d23"/><stop offset="1.000" stop-color="#8f1d23"/></linearGradient><linearGradient id="s28" gradientUnits="userSpaceOnUse" x1="0" y1="61" x2="0" y2="165"><stop offset="0.000" stop-color="#059821"/><stop offset="0.459" stop-color="#059821"/><stop offset="0.536" stop-color="#3c9c26"/><stop offset="0.586" stop-color="#9ca632"/><stop offset="0.676" stop-color="#a87c2a"/><stop offset="0.782" stop-color="#a05427"/><stop offset="0.888" stop-color="#8f1d23"/><stop offset="1.000" stop-color="#8f1d23"/></linearGradient><linearGradient id="s29" gradientUnits="userSpaceOnUse" x1="0" y1="61" x2="0" y2="165"><stop offset="0.000" stop-color="#059821"/><stop offset="0.468" stop-color="#059821"/><stop offset="0.545" stop-color="#3c9c26"/><stop offset="0.594" stop-color="#9ca632"/><stop offset="0.681" stop-color="#a87c2a"/><stop offset="0.787" stop-color="#a05427"/><stop offset="0.893" stop-color="#8f1d23"/><stop offset="1.000" stop-color="#8f1d23"/></linearGradient><linearGradient id="s30" gradientUnits="userSpaceOnUse" x1="0" y1="61" x2="0" y2="165"><stop offset="0.000" stop-color="#059821"/><stop offset="0.477" stop-color="#059821"/><stop offset="0.554" stop-color="#3c9c26"/><stop offset="0.602" stop-color="#9ca632"/><stop offset="0.687" stop-color="#a87c2a"/><stop offset="0.792" stop-color="#a05427"/><stop offset="0.896" stop-color="#8f1d23"/><stop offset="1.000" stop-color="#8f1d23"/></linearGradient><linearGradient id="s31" gradientUnits="userSpaceOnUse" x1="0" y1="61" x2="0" y2="165"><stop offset="0.000" stop-color="#059821"/><stop offset="0.485" stop-color="#059821"/><stop offset="0.562" stop-color="#3c9c26"/><stop offset="0.610" stop-color="#9ca632"/><stop offset="0.694" stop-color="#a87c2a"/><stop offset="0.797" stop-color="#a05427"/><stop offset="0.900" stop-color="#8f1d23"/><stop offset="1.000" stop-color="#8f1d23"/></linearGradient><linearGradient id="s32" gradientUnits="userSpaceOnUse" x1="0" y1="61" x2="0" y2="165"><stop offset="0.000" stop-color="#059821"/><stop offset="0.493" stop-color="#059821"/><stop offset="0.570" stop-color="#3c9c26"/><stop offset="0.618" stop-color="#9ca632"/><stop offset="0.700" stop-color="#a87c2a"/><stop offset="0.801" stop-color="#a05427"/><stop offset="0.903" stop-color="#8f1d23"/><stop offset="1.000" stop-color="#8f1d23"/></linearGradient><linearGradient id="s33" gradientUnits="userSpaceOnUse" x1="0" y1="61" x2="0" y2="165"><stop offset="0.000" stop-color="#059821"/><stop offset="0.501" stop-color="#059821"/><stop offset="0.578" stop-color="#3c9c26"/><stop offset="0.626" stop-color="#9ca632"/><stop offset="0.706" stop-color="#a87c2a"/><stop offset="0.806" stop-color="#a05427"/><stop offset="0.906" stop-color="#8f1d23"/><stop offset="1.000" stop-color="#8f1d23"/></linearGradient><linearGradient id="s34" gradientUnits="userSpaceOnUse" x1="0" y1="61" x2="0" y2="165"><stop offset="0.000" stop-color="#059821"/><stop offset="0.509" stop-color="#059821"/><stop offset="0.586" stop-color="#3c9c26"/><stop offset="0.634" stop-color="#9ca632"/><stop offset="0.713" stop-color="#a87c2a"/><stop offset="0.811" stop-color="#a05427"/><stop offset="0.909" stop-color="#8f1d23"/><stop offset="1.000" stop-color="#8f1d23"/></linearGradient><linearGradient id="s35" gradientUnits="userSpaceOnUse" x1="0" y1="61" x2="0" y2="165"><stop offset="0.000" stop-color="#059821"/><stop offset="0.517" stop-color="#059821"/><stop offset="0.594" stop-color="#3c9c26"/><stop offset="0.642" stop-color="#9ca632"/><stop offset="0.719" stop-color="#a87c2a"/><stop offset="0.816" stop-color="#a05427"/><stop offset="0.913" stop-color="#8f1d23"/><stop offset="1.000" stop-color="#8f1d23"/></linearGradient><linearGradient id="s36" gradientUnits="userSpaceOnUse" x1="0" y1="61" x2="0" y2="165"><stop offset="0.000" stop-color="#059821"/><stop offset="0.519" stop-color="#059821"/><stop offset="0.596" stop-color="#3c9c26"/><stop offset="0.644" stop-color="#9ca632"/><stop offset="0.721" stop-color="#a87c2a"/><stop offset="0.817" stop-color="#a05427"/><stop offset="0.913" stop-color="#8f1d23"/><stop offset="1.000" stop-color="#8f1d23"/></linearGradient></defs><rect x="705.2" y="61" width="1.3" height="104" fill="url(#s0)"/><rect x="706.2" y="61" width="1.3" height="104" fill="url(#s1)"/><rect x="707.2" y="61" width="1.3" height="104" fill="url(#s2)"/><rect x="708.2" y="61" width="1.3" height="104" fill="url(#s3)"/><rect x="709.2" y="61" width="1.3" height="104" fill="url(#s4)"/><rect x="710.2" y="61" width="1.3" height="104" fill="url(#s5)"/><rect x="711.2" y="61" width="1.3" height="104" fill="url(#s6)"/><rect x="712.2" y="61" width="1.3" height="104" fill="url(#s7)"/><rect x="713.2" y="61" width="1.3" height="104" fill="url(#s8)"/><rect x="714.2" y="61" width="1.3" height="104" fill="url(#s9)"/><rect x="715.2" y="61" width="1.3" height="104" fill="url(#s10)"/><rect x="716.2" y="61" width="1.3" height="104" fill="url(#s11)"/><rect x="717.2" y="61" width="1.3" height="104" fill="url(#s12)"/><rect x="718.2" y="61" width="1.3" height="104" fill="url(#s13)"/><rect x="719.2" y="61" width="1.3" height="104" fill="url(#s14)"/><rect x="720.2" y="61" width="1.3" height="104" fill="url(#s15)"/><rect x="721.2" y="61" width="1.3" height="104" fill="url(#s16)"/><rect x="722.2" y="61" width="1.3" height="104" fill="url(#s17)"/><rect x="723.2" y="61" width="1.3" height="104" fill="url(#s18)"/><rect x="724.2" y="61" width="1.3" height="104" fill="url(#s19)"/><rect x="725.2" y="61" width="1.3" height="104" fill="url(#s20)"/><rect x="726.2" y="61" width="1.3" height="104" fill="url(#s21)"/><rect x="727.2" y="61" width="1.3" height="104" fill="url(#s22)"/><rect x="728.2" y="61" width="1.3" height="104" fill="url(#s23)"/><rect x="729.2" y="61" width="1.3" height="104" fill="url(#s24)"/><rect x="730.2" y="61" width="1.3" height="104" fill="url(#s25)"/><rect x="731.2" y="61" width="1.3" height="104" fill="url(#s26)"/><rect x="732.2" y="61" width="1.3" height="104" fill="url(#s27)"/><rect x="733.2" y="61" width="1.3" height="104" fill="url(#s28)"/><rect x="734.2" y="61" width="1.3" height="104" fill="url(#s29)"/><rect x="735.2" y="61" width="1.3" height="104" fill="url(#s30)"/><rect x="736.2" y="61" width="1.3" height="104" fill="url(#s31)"/><rect x="737.2" y="61" width="1.3" height="104" fill="url(#s32)"/><rect x="738.2" y="61" width="1.3" height="104" fill="url(#s33)"/><rect x="739.2" y="61" width="1.3" height="104" fill="url(#s34)"/><rect x="740.2" y="61" width="1.3" height="104" fill="url(#s35)"/><rect x="741.2" y="61" width="0.4" height="104" fill="url(#s36)"/>
</g>
<g clip-path="url(#ch)">
<circle cx="550.00" cy="61.00" r="3.7" fill="#4cd88c" stroke="#ffffff" stroke-width="1.25"/>
<circle cx="597.75" cy="61.00" r="3.7" fill="#4cd88c" stroke="#ffffff" stroke-width="1.25"/>
<circle cx="645.50" cy="61.00" r="3.7" fill="#4cd88c" stroke="#ffffff" stroke-width="1.25"/>
<circle cx="693.25" cy="61.00" r="3.7" fill="#4cd88c" stroke="#ffffff" stroke-width="1.25"/>
<circle cx="550.00" cy="108.75" r="3.5" fill="none" stroke="#0c0a0a" stroke-width="1.4"/>
<circle cx="597.75" cy="108.75" r="3.5" fill="none" stroke="#0c0a0a" stroke-width="1.4"/>
<circle cx="645.50" cy="108.75" r="3.5" fill="none" stroke="#0c0a0a" stroke-width="1.4"/>
<circle cx="693.25" cy="108.75" r="3.5" fill="none" stroke="#0c0a0a" stroke-width="1.4"/>
<circle cx="550.00" cy="156.50" r="3.5" fill="none" stroke="#0c0a0a" stroke-width="1.4"/>
<circle cx="597.75" cy="156.50" r="3.5" fill="none" stroke="#0c0a0a" stroke-width="1.4"/>
<circle cx="645.50" cy="156.50" r="3.5" fill="none" stroke="#0c0a0a" stroke-width="1.4"/>
<circle cx="693.25" cy="156.50" r="3.5" fill="none" stroke="#0c0a0a" stroke-width="1.4"/>
<circle cx="550.00" cy="204.25" r="3.5" fill="none" stroke="#0c0a0a" stroke-width="1.4"/>
<circle cx="597.75" cy="204.25" r="3.5" fill="none" stroke="#0c0a0a" stroke-width="1.4"/>
<circle cx="645.50" cy="204.25" r="3.5" fill="none" stroke="#0c0a0a" stroke-width="1.4"/>
<circle cx="693.25" cy="204.25" r="3.5" fill="none" stroke="#0c0a0a" stroke-width="1.4"/>
<circle cx="550.00" cy="252.00" r="3.5" fill="none" stroke="#0c0a0a" stroke-width="1.4"/>
<circle cx="597.75" cy="252.00" r="3.5" fill="none" stroke="#0c0a0a" stroke-width="1.4"/>
<circle cx="645.50" cy="252.00" r="3.5" fill="none" stroke="#0c0a0a" stroke-width="1.4"/>
<circle cx="693.25" cy="252.00" r="3.5" fill="none" stroke="#0c0a0a" stroke-width="1.4"/>
<circle cx="573.90" cy="84.90" r="3.7" fill="#4cd88c" stroke="#ffffff" stroke-width="1.25"/>
<circle cx="621.65" cy="84.90" r="3.7" fill="#4cd88c" stroke="#ffffff" stroke-width="1.25"/>
<circle cx="669.40" cy="84.90" r="3.7" fill="#4cd88c" stroke="#ffffff" stroke-width="1.25"/>
<circle cx="717.20" cy="65.60" r="3.7" fill="#4cd88c" stroke="#ffffff" stroke-width="1.25"/>
<circle cx="717.20" cy="84.90" r="3.5" fill="#4cd88c" stroke="#0c0a0a" stroke-width="1.4"/>
<circle cx="717.20" cy="132.60" r="3.5" fill="none" stroke="#0c0a0a" stroke-width="1.4"/>
<circle cx="717.20" cy="180.40" r="3.5" fill="none" stroke="#0c0a0a" stroke-width="1.4"/>
<circle cx="717.20" cy="228.20" r="3.5" fill="none" stroke="#0c0a0a" stroke-width="1.4"/>
<circle cx="717.20" cy="252.00" r="3.5" fill="none" stroke="#0c0a0a" stroke-width="1.4"/>
<circle cx="741.00" cy="61.00" r="3.7" fill="#4cd88c" stroke="#ffffff" stroke-width="1.25"/>
<circle cx="741.00" cy="70.55" r="3.7" fill="#4cd88c" stroke="#ffffff" stroke-width="1.25"/>
<circle cx="741.00" cy="80.10" r="3.7" fill="#4cd88c" stroke="#ffffff" stroke-width="1.25"/>
<circle cx="741.00" cy="89.65" r="3.7" fill="#4cd88c" stroke="#ffffff" stroke-width="1.25"/>
<circle cx="741.00" cy="99.20" r="3.7" fill="#4cd88c" stroke="#ffffff" stroke-width="1.25"/>
<circle cx="741.00" cy="108.75" r="3.5" fill="#4cd88c" stroke="#3a66ff" stroke-width="1.4"/>
<circle cx="741.00" cy="118.30" r="3.7" fill="#4cd88c" stroke="#ffffff" stroke-width="1.25"/>
<circle cx="741.00" cy="127.85" r="3.5" fill="none" stroke="#0c0a0a" stroke-width="1.4"/>
<circle cx="741.00" cy="137.40" r="3.5" fill="none" stroke="#0c0a0a" stroke-width="1.4"/>
<circle cx="741.00" cy="146.95" r="3.5" fill="none" stroke="#0c0a0a" stroke-width="1.4"/>
<circle cx="741.00" cy="156.50" r="3.5" fill="none" stroke="#0c0a0a" stroke-width="1.4"/>
<circle cx="741.00" cy="175.60" r="3.5" fill="none" stroke="#0c0a0a" stroke-width="1.4"/>
<circle cx="741.00" cy="194.70" r="3.5" fill="none" stroke="#0c0a0a" stroke-width="1.4"/>
<circle cx="741.00" cy="213.80" r="3.5" fill="none" stroke="#0c0a0a" stroke-width="1.4"/>
<circle cx="741.00" cy="232.90" r="3.5" fill="none" stroke="#0c0a0a" stroke-width="1.4"/>
<circle cx="741.00" cy="252.00" r="3.5" fill="none" stroke="#0c0a0a" stroke-width="1.4"/>
</g>
<g stroke="#dcdcdc" fill="#dcdcdc" stroke-width="1.7">
<path d="M544.3 74V126.3M544.3 185V236" fill="none"/>
<path d="M544.3 71L546.9 76.2H541.7Z M544.3 239L546.9 233.8H541.7Z" stroke="none"/>
<path d="M561 258.9H625.2M670.1 258.9H730" fill="none"/>
<path d="M558.4 258.9L563.4 256.4V261.4Z M732.8 258.9L727.8 256.4V261.4Z" stroke="none"/>
</g>
<path d="M739.7 259.2C738.6 257.3 736 257.3 736 259.2C736 261.1 738.6 261.1 739.7 259.2C740.8 257.3 743.4 257.3 743.4 259.2C743.4 261.1 740.8 261.1 739.7 259.2Z" fill="none" stroke="#dcdcdc" stroke-width="1"/>
<g fill="none" stroke-linecap="round" stroke-linejoin="round">
<path d="M68.21 342.51L67.63 342.8L67.05 343.38L66.76 343.96L66.47 344.83L66.47 346.28L66.76 347.15L67.05 347.73L67.63 348.31L68.21 348.6L69.37 348.6L69.95 348.31L70.53 347.73L70.82 347.15L71.11 346.28L71.11 344.83L70.82 343.96L70.53 343.38L69.95 342.8L69.37 342.51L68.21 342.51M73.14 344.54L73.14 350.63M73.14 345.41L73.72 344.83L74.3 344.54L75.17 344.54L75.75 344.83L76.33 345.41L76.62 346.28L76.62 346.86L76.33 347.73L75.75 348.31L75.17 348.6L74.3 348.6L73.72 348.31L73.14 347.73M78.94 342.51L78.94 347.44L79.23 348.31L79.81 348.6L80.39 348.6M78.07 344.54L80.1 344.54M81.84 342.51L82.13 342.8L82.42 342.51L82.13 342.22L81.84 342.51M82.13 344.54L82.13 348.6M84.45 344.54L84.45 348.6M84.45 345.7L85.32 344.83L85.9 344.54L86.77 344.54L87.35 344.83L87.64 345.7L87.64 348.6M87.64 345.7L88.51 344.83L89.09 344.54L89.96 344.54L90.54 344.83L90.83 345.7L90.83 348.6M92.86 342.51L93.15 342.8L93.44 342.51L93.15 342.22L92.86 342.51M93.15 344.54L93.15 348.6M98.37 344.54L95.18 348.6M95.18 344.54L98.37 344.54M95.18 348.6L98.37 348.6M103.59 344.54L103.59 348.6M103.59 345.41L103.01 344.83L102.43 344.54L101.56 344.54L100.98 344.83L100.4 345.41L100.11 346.28L100.11 346.86L100.4 347.73L100.98 348.31L101.56 348.6L102.43 348.6L103.01 348.31L103.59 347.73M106.2 342.51L106.2 347.44L106.49 348.31L107.07 348.6L107.65 348.6M105.33 344.54L107.36 344.54M109.1 342.51L109.39 342.8L109.68 342.51L109.39 342.22L109.1 342.51M109.39 344.54L109.39 348.6M112.87 344.54L112.29 344.83L111.71 345.41L111.42 346.28L111.42 346.86L111.71 347.73L112.29 348.31L112.87 348.6L113.74 348.6L114.32 348.31L114.9 347.73L115.19 346.86L115.19 346.28L114.9 345.41L114.32 344.83L113.74 344.54L112.87 344.54M117.22 344.54L117.22 348.6M117.22 345.7L118.09 344.83L118.67 344.54L119.54 344.54L120.12 344.83L120.41 345.7L120.41 348.6M130.27 345.41L129.98 344.83L129.11 344.54L128.24 344.54L127.37 344.83L127.08 345.41L127.37 345.99L127.95 346.28L129.4 346.57L129.98 346.86L130.27 347.44L130.27 347.73L129.98 348.31L129.11 348.6L128.24 348.6L127.37 348.31L127.08 347.73M132.59 342.51L132.59 347.44L132.88 348.31L133.46 348.6L134.04 348.6M131.72 344.54L133.75 344.54M138.97 344.54L138.97 348.6M138.97 345.41L138.39 344.83L137.81 344.54L136.94 344.54L136.36 344.83L135.78 345.41L135.49 346.28L135.49 346.86L135.78 347.73L136.36 348.31L136.94 348.6L137.81 348.6L138.39 348.31L138.97 347.73M141.58 342.51L141.58 347.44L141.87 348.31L142.45 348.6L143.03 348.6M140.71 344.54L142.74 344.54M144.48 346.28L147.96 346.28L147.96 345.7L147.67 345.12L147.38 344.83L146.8 344.54L145.93 344.54L145.35 344.83L144.77 345.41L144.48 346.28L144.48 346.86L144.77 347.73L145.35 348.31L145.93 348.6L146.8 348.6L147.38 348.31L147.96 347.73M150.28 344.54L149.99 344.83L150.28 345.12L150.57 344.83L150.28 344.54M150.28 348.02L149.99 348.31L150.28 348.6L150.57 348.31L150.28 348.02M157.53 342.51L157.53 348.6M157.53 345.41L158.11 344.83L158.69 344.54L159.56 344.54L160.14 344.83L160.72 345.41L161.01 346.28L161.01 346.86L160.72 347.73L160.14 348.31L159.56 348.6L158.69 348.6L158.11 348.31L157.53 347.73M163.04 344.54L163.04 347.44L163.33 348.31L163.91 348.6L164.78 348.6L165.36 348.31L166.23 347.44M166.23 344.54L166.23 348.6M171.45 345.41L171.16 344.83L170.29 344.54L169.42 344.54L168.55 344.83L168.26 345.41L168.55 345.99L169.13 346.28L170.58 346.57L171.16 346.86L171.45 347.44L171.45 347.73L171.16 348.31L170.29 348.6L169.42 348.6L168.55 348.31L168.26 347.73M172.9 344.54L174.64 348.6M176.38 344.54L174.64 348.6L174.06 349.76L173.48 350.34L172.9 350.63L172.61 350.63" stroke="#ff4058" stroke-width="1.15" opacity="1"/>
<path d="M66.76 357.91L66.76 364M66.76 364L70.24 364M72.85 359.94L72.27 360.23L71.69 360.81L71.4 361.68L71.4 362.26L71.69 363.13L72.27 363.71L72.85 364L73.72 364L74.3 363.71L74.88 363.13L75.17 362.26L75.17 361.68L74.88 360.81L74.3 360.23L73.72 359.94L72.85 359.94M80.39 359.94L80.39 364M80.39 360.81L79.81 360.23L79.23 359.94L78.36 359.94L77.78 360.23L77.2 360.81L76.91 361.68L76.91 362.26L77.2 363.13L77.78 363.71L78.36 364L79.23 364L79.81 363.71L80.39 363.13M85.9 357.91L85.9 364M85.9 360.81L85.32 360.23L84.74 359.94L83.87 359.94L83.29 360.23L82.71 360.81L82.42 361.68L82.42 362.26L82.71 363.13L83.29 363.71L83.87 364L84.74 364L85.32 363.71L85.9 363.13M87.93 361.68L91.41 361.68L91.41 361.1L91.12 360.52L90.83 360.23L90.25 359.94L89.38 359.94L88.8 360.23L88.22 360.81L87.93 361.68L87.93 362.26L88.22 363.13L88.8 363.71L89.38 364L90.25 364L90.83 363.71L91.41 363.13M96.63 357.91L96.63 364M96.63 360.81L96.05 360.23L95.47 359.94L94.6 359.94L94.02 360.23L93.44 360.81L93.15 361.68L93.15 362.26L93.44 363.13L94.02 363.71L94.6 364L95.47 364L96.05 363.71L96.63 363.13M103.88 357.91L103.88 362.84L104.17 363.71L104.75 364L105.33 364M103.01 359.94L105.04 359.94M110.26 359.94L110.26 364M110.26 360.81L109.68 360.23L109.1 359.94L108.23 359.94L107.65 360.23L107.07 360.81L106.78 361.68L106.78 362.26L107.07 363.13L107.65 363.71L108.23 364L109.1 364L109.68 363.71L110.26 363.13M112.58 359.94L112.58 364M112.58 361.68L112.87 360.81L113.45 360.23L114.03 359.94L114.9 359.94M119.54 359.94L119.54 364.58L119.25 365.45L118.96 365.74L118.38 366.03L117.51 366.03L116.93 365.74M119.54 360.81L118.96 360.23L118.38 359.94L117.51 359.94L116.93 360.23L116.35 360.81L116.06 361.68L116.06 362.26L116.35 363.13L116.93 363.71L117.51 364L118.38 364L118.96 363.71L119.54 363.13M121.57 361.68L125.05 361.68L125.05 361.1L124.76 360.52L124.47 360.23L123.89 359.94L123.02 359.94L122.44 360.23L121.86 360.81L121.57 361.68L121.57 362.26L121.86 363.13L122.44 363.71L123.02 364L123.89 364L124.47 363.71L125.05 363.13M127.37 357.91L127.37 362.84L127.66 363.71L128.24 364L128.82 364M126.5 359.94L128.53 359.94M133.46 360.81L133.17 360.23L132.3 359.94L131.43 359.94L130.56 360.23L130.27 360.81L130.56 361.39L131.14 361.68L132.59 361.97L133.17 362.26L133.46 362.84L133.46 363.13L133.17 363.71L132.3 364L131.43 364L130.56 363.71L130.27 363.13M135.78 359.94L135.49 360.23L135.78 360.52L136.07 360.23L135.78 359.94M135.78 363.42L135.49 363.71L135.78 364L136.07 363.71L135.78 363.42M143.61 359.07L144.19 358.78L145.06 357.91L145.06 364M149.12 364L148.83 363.71L149.12 363.42L149.41 363.71L149.41 364.29L149.12 364.87L148.83 365.16M156.37 359.36L156.37 359.07L156.66 358.49L156.95 358.2L157.53 357.91L158.69 357.91L159.27 358.2L159.56 358.49L159.85 359.07L159.85 359.65L159.56 360.23L158.98 361.1L156.08 364L160.14 364M162.46 364L162.17 363.71L162.46 363.42L162.75 363.71L162.75 364.29L162.46 364.87L162.17 365.16M172.32 357.91L169.42 361.97L173.77 361.97M172.32 357.91L172.32 364" stroke="#fff" stroke-width="1.15" opacity="1"/>
<path d="M66.76 373.31L66.76 379.4M66.76 373.31L69.37 373.31L70.24 373.6L70.53 373.89L70.82 374.47L70.82 375.05L70.53 375.63L70.24 375.92L69.37 376.21L66.76 376.21M68.79 376.21L70.82 379.4M72.56 377.08L76.04 377.08L76.04 376.5L75.75 375.92L75.46 375.63L74.88 375.34L74.01 375.34L73.43 375.63L72.85 376.21L72.56 377.08L72.56 377.66L72.85 378.53L73.43 379.11L74.01 379.4L74.88 379.4L75.46 379.11L76.04 378.53M81.26 376.21L80.68 375.63L80.1 375.34L79.23 375.34L78.65 375.63L78.07 376.21L77.78 377.08L77.78 377.66L78.07 378.53L78.65 379.11L79.23 379.4L80.1 379.4L80.68 379.11L81.26 378.53M84.45 375.34L83.87 375.63L83.29 376.21L83 377.08L83 377.66L83.29 378.53L83.87 379.11L84.45 379.4L85.32 379.4L85.9 379.11L86.48 378.53L86.77 377.66L86.77 377.08L86.48 376.21L85.9 375.63L85.32 375.34L84.45 375.34M91.99 375.34L91.99 379.98L91.7 380.85L91.41 381.14L90.83 381.43L89.96 381.43L89.38 381.14M91.99 376.21L91.41 375.63L90.83 375.34L89.96 375.34L89.38 375.63L88.8 376.21L88.51 377.08L88.51 377.66L88.8 378.53L89.38 379.11L89.96 379.4L90.83 379.4L91.41 379.11L91.99 378.53M94.31 375.34L94.31 379.4M94.31 376.5L95.18 375.63L95.76 375.34L96.63 375.34L97.21 375.63L97.5 376.5L97.5 379.4M99.53 373.31L99.82 373.6L100.11 373.31L99.82 373.02L99.53 373.31M99.82 375.34L99.82 379.4M105.04 375.34L101.85 379.4M101.85 375.34L105.04 375.34M101.85 379.4L105.04 379.4M106.78 377.08L110.26 377.08L110.26 376.5L109.97 375.92L109.68 375.63L109.1 375.34L108.23 375.34L107.65 375.63L107.07 376.21L106.78 377.08L106.78 377.66L107.07 378.53L107.65 379.11L108.23 379.4L109.1 379.4L109.68 379.11L110.26 378.53M115.48 373.31L115.48 379.4M115.48 376.21L114.9 375.63L114.32 375.34L113.45 375.34L112.87 375.63L112.29 376.21L112 377.08L112 377.66L112.29 378.53L112.87 379.11L113.45 379.4L114.32 379.4L114.9 379.11L115.48 378.53M122.73 373.31L122.73 378.24L123.02 379.11L123.6 379.4L124.18 379.4M121.86 375.34L123.89 375.34M129.11 375.34L129.11 379.4M129.11 376.21L128.53 375.63L127.95 375.34L127.08 375.34L126.5 375.63L125.92 376.21L125.63 377.08L125.63 377.66L125.92 378.53L126.5 379.11L127.08 379.4L127.95 379.4L128.53 379.11L129.11 378.53M131.43 375.34L131.43 379.4M131.43 377.08L131.72 376.21L132.3 375.63L132.88 375.34L133.75 375.34M138.39 375.34L138.39 379.98L138.1 380.85L137.81 381.14L137.23 381.43L136.36 381.43L135.78 381.14M138.39 376.21L137.81 375.63L137.23 375.34L136.36 375.34L135.78 375.63L135.2 376.21L134.91 377.08L134.91 377.66L135.2 378.53L135.78 379.11L136.36 379.4L137.23 379.4L137.81 379.11L138.39 378.53M140.42 377.08L143.9 377.08L143.9 376.5L143.61 375.92L143.32 375.63L142.74 375.34L141.87 375.34L141.29 375.63L140.71 376.21L140.42 377.08L140.42 377.66L140.71 378.53L141.29 379.11L141.87 379.4L142.74 379.4L143.32 379.11L143.9 378.53M146.22 373.31L146.22 378.24L146.51 379.11L147.09 379.4L147.67 379.4M145.35 375.34L147.38 375.34M152.31 376.21L152.02 375.63L151.15 375.34L150.28 375.34L149.41 375.63L149.12 376.21L149.41 376.79L149.99 377.08L151.44 377.37L152.02 377.66L152.31 378.24L152.31 378.53L152.02 379.11L151.15 379.4L150.28 379.4L149.41 379.11L149.12 378.53M154.63 375.34L154.34 375.63L154.63 375.92L154.92 375.63L154.63 375.34M154.63 378.82L154.34 379.11L154.63 379.4L154.92 379.11L154.63 378.82M162.46 374.47L163.04 374.18L163.91 373.31L163.91 379.4M167.97 379.4L167.68 379.11L167.97 378.82L168.26 379.11L168.26 379.69L167.97 380.27L167.68 380.56M175.22 374.76L175.22 374.47L175.51 373.89L175.8 373.6L176.38 373.31L177.54 373.31L178.12 373.6L178.41 373.89L178.7 374.47L178.7 375.05L178.41 375.63L177.83 376.5L174.93 379.4L178.99 379.4M181.31 379.4L181.02 379.11L181.31 378.82L181.6 379.11L181.6 379.69L181.31 380.27L181.02 380.56M191.17 373.31L188.27 377.37L192.62 377.37M191.17 373.31L191.17 379.4" stroke="#fff" stroke-width="1.15" opacity="1"/>
<path d="M66.76 388.71L66.76 394.8M66.76 388.71L70.82 394.8M70.82 388.71L70.82 394.8M73.14 390.74L73.14 393.64L73.43 394.51L74.01 394.8L74.88 394.8L75.46 394.51L76.33 393.64M76.33 390.74L76.33 394.8M78.65 390.74L78.65 394.8M78.65 391.9L79.52 391.03L80.1 390.74L80.97 390.74L81.55 391.03L81.84 391.9L81.84 394.8M81.84 391.9L82.71 391.03L83.29 390.74L84.16 390.74L84.74 391.03L85.03 391.9L85.03 394.8M87.35 388.71L87.35 394.8M87.35 391.61L87.93 391.03L88.51 390.74L89.38 390.74L89.96 391.03L90.54 391.61L90.83 392.48L90.83 393.06L90.54 393.93L89.96 394.51L89.38 394.8L88.51 394.8L87.93 394.51L87.35 393.93M92.57 392.48L96.05 392.48L96.05 391.9L95.76 391.32L95.47 391.03L94.89 390.74L94.02 390.74L93.44 391.03L92.86 391.61L92.57 392.48L92.57 393.06L92.86 393.93L93.44 394.51L94.02 394.8L94.89 394.8L95.47 394.51L96.05 393.93M98.08 390.74L98.08 394.8M98.08 392.48L98.37 391.61L98.95 391.03L99.53 390.74L100.4 390.74M107.65 390.74L107.07 391.03L106.49 391.61L106.2 392.48L106.2 393.06L106.49 393.93L107.07 394.51L107.65 394.8L108.52 394.8L109.1 394.51L109.68 393.93L109.97 393.06L109.97 392.48L109.68 391.61L109.1 391.03L108.52 390.74L107.65 390.74M113.74 388.71L113.16 388.71L112.58 389L112.29 389.87L112.29 394.8M111.42 390.74L113.45 390.74M119.83 388.71L120.12 389L120.41 388.71L120.12 388.42L119.83 388.71M120.12 390.74L120.12 394.8M122.44 390.74L122.44 394.8M122.44 391.9L123.31 391.03L123.89 390.74L124.76 390.74L125.34 391.03L125.63 391.9L125.63 394.8M125.63 391.9L126.5 391.03L127.08 390.74L127.95 390.74L128.53 391.03L128.82 391.9L128.82 394.8M134.33 390.74L134.33 394.8M134.33 391.61L133.75 391.03L133.17 390.74L132.3 390.74L131.72 391.03L131.14 391.61L130.85 392.48L130.85 393.06L131.14 393.93L131.72 394.51L132.3 394.8L133.17 394.8L133.75 394.51L134.33 393.93M139.84 390.74L139.84 395.38L139.55 396.25L139.26 396.54L138.68 396.83L137.81 396.83L137.23 396.54M139.84 391.61L139.26 391.03L138.68 390.74L137.81 390.74L137.23 391.03L136.65 391.61L136.36 392.48L136.36 393.06L136.65 393.93L137.23 394.51L137.81 394.8L138.68 394.8L139.26 394.51L139.84 393.93M141.87 392.48L145.35 392.48L145.35 391.9L145.06 391.32L144.77 391.03L144.19 390.74L143.32 390.74L142.74 391.03L142.16 391.61L141.87 392.48L141.87 393.06L142.16 393.93L142.74 394.51L143.32 394.8L144.19 394.8L144.77 394.51L145.35 393.93M150.28 391.61L149.99 391.03L149.12 390.74L148.25 390.74L147.38 391.03L147.09 391.61L147.38 392.19L147.96 392.48L149.41 392.77L149.99 393.06L150.28 393.64L150.28 393.93L149.99 394.51L149.12 394.8L148.25 394.8L147.38 394.51L147.09 393.93M160.14 390.74L160.14 394.8M160.14 391.61L159.56 391.03L158.98 390.74L158.11 390.74L157.53 391.03L156.95 391.61L156.66 392.48L156.66 393.06L156.95 393.93L157.53 394.51L158.11 394.8L158.98 394.8L159.56 394.51L160.14 393.93M165.65 388.71L165.65 394.8M165.65 391.61L165.07 391.03L164.49 390.74L163.62 390.74L163.04 391.03L162.46 391.61L162.17 392.48L162.17 393.06L162.46 393.93L163.04 394.51L163.62 394.8L164.49 394.8L165.07 394.51L165.65 393.93M171.16 388.71L171.16 394.8M171.16 391.61L170.58 391.03L170 390.74L169.13 390.74L168.55 391.03L167.97 391.61L167.68 392.48L167.68 393.06L167.97 393.93L168.55 394.51L169.13 394.8L170 394.8L170.58 394.51L171.16 393.93M173.19 392.48L176.67 392.48L176.67 391.9L176.38 391.32L176.09 391.03L175.51 390.74L174.64 390.74L174.06 391.03L173.48 391.61L173.19 392.48L173.19 393.06L173.48 393.93L174.06 394.51L174.64 394.8L175.51 394.8L176.09 394.51L176.67 393.93M181.89 388.71L181.89 394.8M181.89 391.61L181.31 391.03L180.73 390.74L179.86 390.74L179.28 391.03L178.7 391.61L178.41 392.48L178.41 393.06L178.7 393.93L179.28 394.51L179.86 394.8L180.73 394.8L181.31 394.51L181.89 393.93M184.5 390.74L184.21 391.03L184.5 391.32L184.79 391.03L184.5 390.74M184.5 394.22L184.21 394.51L184.5 394.8L184.79 394.51L184.5 394.22M192.33 389.87L192.91 389.58L193.78 388.71L193.78 394.8M197.84 388.71L201.03 388.71L199.29 391.03L200.16 391.03L200.74 391.32L201.03 391.61L201.32 392.48L201.32 393.06L201.03 393.93L200.45 394.51L199.58 394.8L198.71 394.8L197.84 394.51L197.55 394.22L197.26 393.64M207.12 388.71L204.22 394.8M203.06 388.71L207.12 388.71" stroke="#fff" stroke-width="1.15" opacity="1"/>
<path d="M292.32 342.41L292.32 348.5M290.29 342.41L294.35 342.41M298.99 344.44L298.99 348.5M298.99 345.31L298.41 344.73L297.83 344.44L296.96 344.44L296.38 344.73L295.8 345.31L295.51 346.18L295.51 346.76L295.8 347.63L296.38 348.21L296.96 348.5L297.83 348.5L298.41 348.21L298.99 347.63M301.31 344.44L301.31 348.5M301.31 346.18L301.6 345.31L302.18 344.73L302.76 344.44L303.63 344.44M308.27 344.44L308.27 349.08L307.98 349.95L307.69 350.24L307.11 350.53L306.24 350.53L305.66 350.24M308.27 345.31L307.69 344.73L307.11 344.44L306.24 344.44L305.66 344.73L305.08 345.31L304.79 346.18L304.79 346.76L305.08 347.63L305.66 348.21L306.24 348.5L307.11 348.5L307.69 348.21L308.27 347.63M310.3 346.18L313.78 346.18L313.78 345.6L313.49 345.02L313.2 344.73L312.62 344.44L311.75 344.44L311.17 344.73L310.59 345.31L310.3 346.18L310.3 346.76L310.59 347.63L311.17 348.21L311.75 348.5L312.62 348.5L313.2 348.21L313.78 347.63M316.1 342.41L316.1 347.34L316.39 348.21L316.97 348.5L317.55 348.5M315.23 344.44L317.26 344.44M324.51 343.57L325.09 343.28L325.96 342.41L325.96 348.5M330.02 344.44L329.73 344.73L330.02 345.02L330.31 344.73L330.02 344.44M330.02 347.92L329.73 348.21L330.02 348.5L330.31 348.21L330.02 347.92M339.3 341.25L338.72 341.83L338.14 342.7L337.56 343.86L337.27 345.31L337.27 346.47L337.56 347.92L338.14 349.08L338.72 349.95L339.3 350.53M341.33 345.89L346.55 345.89M349.45 343.57L350.03 343.28L350.9 342.41L350.9 348.5M358.44 342.41L355.54 348.5M354.38 342.41L358.44 342.41M360.76 347.92L360.47 348.21L360.76 348.5L361.05 348.21L360.76 347.92M367.14 342.41L364.24 348.5M363.08 342.41L367.14 342.41M369.75 343.57L370.33 343.28L371.2 342.41L371.2 348.5M375.26 342.41L378.45 342.41L376.71 344.73L377.58 344.73L378.16 345.02L378.45 345.31L378.74 346.18L378.74 346.76L378.45 347.63L377.87 348.21L377 348.5L376.13 348.5L375.26 348.21L374.97 347.92L374.68 347.34M381.06 348.5L380.77 348.21L381.06 347.92L381.35 348.21L381.35 348.79L381.06 349.37L380.77 349.66M389.47 342.41L388.6 342.7L388.31 343.28L388.31 343.86L388.6 344.44L389.18 344.73L390.34 345.02L391.21 345.31L391.79 345.89L392.08 346.47L392.08 347.34L391.79 347.92L391.5 348.21L390.63 348.5L389.47 348.5L388.6 348.21L388.31 347.92L388.02 347.34L388.02 346.47L388.31 345.89L388.89 345.31L389.76 345.02L390.92 344.73L391.5 344.44L391.79 343.86L391.79 343.28L391.5 342.7L390.63 342.41L389.47 342.41M394.69 343.57L395.27 343.28L396.14 342.41L396.14 348.5M400.2 347.92L399.91 348.21L400.2 348.5L400.49 348.21L400.2 347.92M402.81 343.86L402.81 343.57L403.1 342.99L403.39 342.7L403.97 342.41L405.13 342.41L405.71 342.7L406 342.99L406.29 343.57L406.29 344.15L406 344.73L405.42 345.6L402.52 348.5L406.58 348.5M412.09 343.28L411.8 342.7L410.93 342.41L410.35 342.41L409.48 342.7L408.9 343.57L408.61 345.02L408.61 346.47L408.9 347.63L409.48 348.21L410.35 348.5L410.64 348.5L411.51 348.21L412.09 347.63L412.38 346.76L412.38 346.47L412.09 345.6L411.51 345.02L410.64 344.73L410.35 344.73L409.48 345.02L408.9 345.6L408.61 346.47M415.57 342.41L414.7 342.7L414.41 343.28L414.41 343.86L414.7 344.44L415.28 344.73L416.44 345.02L417.31 345.31L417.89 345.89L418.18 346.47L418.18 347.34L417.89 347.92L417.6 348.21L416.73 348.5L415.57 348.5L414.7 348.21L414.41 347.92L414.12 347.34L414.12 346.47L414.41 345.89L414.99 345.31L415.86 345.02L417.02 344.73L417.6 344.44L417.89 343.86L417.89 343.28L417.6 342.7L416.73 342.41L415.57 342.41M420.5 348.5L420.21 348.21L420.5 347.92L420.79 348.21L420.79 348.79L420.5 349.37L420.21 349.66M427.75 345.89L432.97 345.89M435.87 343.57L436.45 343.28L437.32 342.41L437.32 348.5M444.86 342.41L441.96 348.5M440.8 342.41L444.86 342.41M450.37 344.44L450.08 345.31L449.5 345.89L448.63 346.18L448.34 346.18L447.47 345.89L446.89 345.31L446.6 344.44L446.6 344.15L446.89 343.28L447.47 342.7L448.34 342.41L448.63 342.41L449.5 342.7L450.08 343.28L450.37 344.44L450.37 345.89L450.08 347.34L449.5 348.21L448.63 348.5L448.05 348.5L447.18 348.21L446.89 347.63M452.98 347.92L452.69 348.21L452.98 348.5L453.27 348.21L452.98 347.92M456.17 343.57L456.75 343.28L457.62 342.41L457.62 348.5M461.39 343.86L461.39 343.57L461.68 342.99L461.97 342.7L462.55 342.41L463.71 342.41L464.29 342.7L464.58 342.99L464.87 343.57L464.87 344.15L464.58 344.73L464 345.6L461.1 348.5L465.16 348.5M468.64 342.41L467.77 342.7L467.19 343.57L466.9 345.02L466.9 345.89L467.19 347.34L467.77 348.21L468.64 348.5L469.22 348.5L470.09 348.21L470.67 347.34L470.96 345.89L470.96 345.02L470.67 343.57L470.09 342.7L469.22 342.41L468.64 342.41M472.7 341.25L473.28 341.83L473.86 342.7L474.44 343.86L474.73 345.31L474.73 346.47L474.44 347.92L473.86 349.08L473.28 349.95L472.7 350.53" stroke="#fff" stroke-width="1.15" opacity="1"/>
<path d="M292.32 357.81L292.32 363.9M290.29 357.81L294.35 357.81M298.99 359.84L298.99 363.9M298.99 360.71L298.41 360.13L297.83 359.84L296.96 359.84L296.38 360.13L295.8 360.71L295.51 361.58L295.51 362.16L295.8 363.03L296.38 363.61L296.96 363.9L297.83 363.9L298.41 363.61L298.99 363.03M301.31 359.84L301.31 363.9M301.31 361.58L301.6 360.71L302.18 360.13L302.76 359.84L303.63 359.84M308.27 359.84L308.27 364.48L307.98 365.35L307.69 365.64L307.11 365.93L306.24 365.93L305.66 365.64M308.27 360.71L307.69 360.13L307.11 359.84L306.24 359.84L305.66 360.13L305.08 360.71L304.79 361.58L304.79 362.16L305.08 363.03L305.66 363.61L306.24 363.9L307.11 363.9L307.69 363.61L308.27 363.03M310.3 361.58L313.78 361.58L313.78 361L313.49 360.42L313.2 360.13L312.62 359.84L311.75 359.84L311.17 360.13L310.59 360.71L310.3 361.58L310.3 362.16L310.59 363.03L311.17 363.61L311.75 363.9L312.62 363.9L313.2 363.61L313.78 363.03M316.1 357.81L316.1 362.74L316.39 363.61L316.97 363.9L317.55 363.9M315.23 359.84L317.26 359.84M323.93 359.26L323.93 358.97L324.22 358.39L324.51 358.1L325.09 357.81L326.25 357.81L326.83 358.1L327.12 358.39L327.41 358.97L327.41 359.55L327.12 360.13L326.54 361L323.64 363.9L327.7 363.9M330.02 359.84L329.73 360.13L330.02 360.42L330.31 360.13L330.02 359.84M330.02 363.32L329.73 363.61L330.02 363.9L330.31 363.61L330.02 363.32M339.3 356.65L338.72 357.23L338.14 358.1L337.56 359.26L337.27 360.71L337.27 361.87L337.56 363.32L338.14 364.48L338.72 365.35L339.3 365.93M341.33 361.29L346.55 361.29M349.45 358.97L350.03 358.68L350.9 357.81L350.9 363.9M358.15 359.84L357.86 360.71L357.28 361.29L356.41 361.58L356.12 361.58L355.25 361.29L354.67 360.71L354.38 359.84L354.38 359.55L354.67 358.68L355.25 358.1L356.12 357.81L356.41 357.81L357.28 358.1L357.86 358.68L358.15 359.84L358.15 361.29L357.86 362.74L357.28 363.61L356.41 363.9L355.83 363.9L354.96 363.61L354.67 363.03M360.76 363.32L360.47 363.61L360.76 363.9L361.05 363.61L360.76 363.32M365.98 357.81L363.08 361.87L367.43 361.87M365.98 357.81L365.98 363.9M370.62 357.81L369.75 358.1L369.17 358.97L368.88 360.42L368.88 361.29L369.17 362.74L369.75 363.61L370.62 363.9L371.2 363.9L372.07 363.61L372.65 362.74L372.94 361.29L372.94 360.42L372.65 358.97L372.07 358.1L371.2 357.81L370.62 357.81M378.74 357.81L375.84 363.9M374.68 357.81L378.74 357.81M381.06 363.9L380.77 363.61L381.06 363.32L381.35 363.61L381.35 364.19L381.06 364.77L380.77 365.06M388.89 358.97L389.47 358.68L390.34 357.81L390.34 363.9M397.3 357.81L394.4 357.81L394.11 360.42L394.4 360.13L395.27 359.84L396.14 359.84L397.01 360.13L397.59 360.71L397.88 361.58L397.88 362.16L397.59 363.03L397.01 363.61L396.14 363.9L395.27 363.9L394.4 363.61L394.11 363.32L393.82 362.74M403.39 358.68L403.1 358.1L402.23 357.81L401.65 357.81L400.78 358.1L400.2 358.97L399.91 360.42L399.91 361.87L400.2 363.03L400.78 363.61L401.65 363.9L401.94 363.9L402.81 363.61L403.39 363.03L403.68 362.16L403.68 361.87L403.39 361L402.81 360.42L401.94 360.13L401.65 360.13L400.78 360.42L400.2 361L399.91 361.87M406 363.32L405.71 363.61L406 363.9L406.29 363.61L406 363.32M412.38 357.81L409.48 363.9M408.32 357.81L412.38 357.81M417.6 357.81L414.7 357.81L414.41 360.42L414.7 360.13L415.57 359.84L416.44 359.84L417.31 360.13L417.89 360.71L418.18 361.58L418.18 362.16L417.89 363.03L417.31 363.61L416.44 363.9L415.57 363.9L414.7 363.61L414.41 363.32L414.12 362.74M420.79 358.97L421.37 358.68L422.24 357.81L422.24 363.9M426.3 363.9L426.01 363.61L426.3 363.32L426.59 363.61L426.59 364.19L426.3 364.77L426.01 365.06M433.55 361.29L438.77 361.29M443.7 357.81L440.8 361.87L445.15 361.87M443.7 357.81L443.7 363.9M447.47 358.97L448.05 358.68L448.92 357.81L448.92 363.9M453.27 358.97L453.85 358.68L454.72 357.81L454.72 363.9M458.78 363.32L458.49 363.61L458.78 363.9L459.07 363.61L458.78 363.32M461.68 357.81L464.87 357.81L463.13 360.13L464 360.13L464.58 360.42L464.87 360.71L465.16 361.58L465.16 362.16L464.87 363.03L464.29 363.61L463.42 363.9L462.55 363.9L461.68 363.61L461.39 363.32L461.1 362.74M467.48 357.81L470.67 357.81L468.93 360.13L469.8 360.13L470.38 360.42L470.67 360.71L470.96 361.58L470.96 362.16L470.67 363.03L470.09 363.61L469.22 363.9L468.35 363.9L467.48 363.61L467.19 363.32L466.9 362.74M476.18 357.81L473.28 357.81L472.99 360.42L473.28 360.13L474.15 359.84L475.02 359.84L475.89 360.13L476.47 360.71L476.76 361.58L476.76 362.16L476.47 363.03L475.89 363.61L475.02 363.9L474.15 363.9L473.28 363.61L472.99 363.32L472.7 362.74M478.5 356.65L479.08 357.23L479.66 358.1L480.24 359.26L480.53 360.71L480.53 361.87L480.24 363.32L479.66 364.48L479.08 365.35L478.5 365.93" stroke="#fff" stroke-width="1.15" opacity="1"/>
<path d="M292.32 373.21L292.32 379.3M290.29 373.21L294.35 373.21M298.99 375.24L298.99 379.3M298.99 376.11L298.41 375.53L297.83 375.24L296.96 375.24L296.38 375.53L295.8 376.11L295.51 376.98L295.51 377.56L295.8 378.43L296.38 379.01L296.96 379.3L297.83 379.3L298.41 379.01L298.99 378.43M301.31 375.24L301.31 379.3M301.31 376.98L301.6 376.11L302.18 375.53L302.76 375.24L303.63 375.24M308.27 375.24L308.27 379.88L307.98 380.75L307.69 381.04L307.11 381.33L306.24 381.33L305.66 381.04M308.27 376.11L307.69 375.53L307.11 375.24L306.24 375.24L305.66 375.53L305.08 376.11L304.79 376.98L304.79 377.56L305.08 378.43L305.66 379.01L306.24 379.3L307.11 379.3L307.69 379.01L308.27 378.43M310.3 376.98L313.78 376.98L313.78 376.4L313.49 375.82L313.2 375.53L312.62 375.24L311.75 375.24L311.17 375.53L310.59 376.11L310.3 376.98L310.3 377.56L310.59 378.43L311.17 379.01L311.75 379.3L312.62 379.3L313.2 379.01L313.78 378.43M316.1 373.21L316.1 378.14L316.39 379.01L316.97 379.3L317.55 379.3M315.23 375.24L317.26 375.24M326.54 373.21L323.64 377.27L327.99 377.27M326.54 373.21L326.54 379.3M330.02 375.24L329.73 375.53L330.02 375.82L330.31 375.53L330.02 375.24M330.02 378.72L329.73 379.01L330.02 379.3L330.31 379.01L330.02 378.72M339.3 372.05L338.72 372.63L338.14 373.5L337.56 374.66L337.27 376.11L337.27 377.27L337.56 378.72L338.14 379.88L338.72 380.75L339.3 381.33M341.33 376.69L346.55 376.69M348.87 374.66L348.87 374.37L349.16 373.79L349.45 373.5L350.03 373.21L351.19 373.21L351.77 373.5L352.06 373.79L352.35 374.37L352.35 374.95L352.06 375.53L351.48 376.4L348.58 379.3L352.64 379.3M355.25 374.37L355.83 374.08L356.7 373.21L356.7 379.3M360.76 378.72L360.47 379.01L360.76 379.3L361.05 379.01L360.76 378.72M366.85 375.24L366.56 376.11L365.98 376.69L365.11 376.98L364.82 376.98L363.95 376.69L363.37 376.11L363.08 375.24L363.08 374.95L363.37 374.08L363.95 373.5L364.82 373.21L365.11 373.21L365.98 373.5L366.56 374.08L366.85 375.24L366.85 376.69L366.56 378.14L365.98 379.01L365.11 379.3L364.53 379.3L363.66 379.01L363.37 378.43M369.75 374.37L370.33 374.08L371.2 373.21L371.2 379.3M378.16 373.21L375.26 373.21L374.97 375.82L375.26 375.53L376.13 375.24L377 375.24L377.87 375.53L378.45 376.11L378.74 376.98L378.74 377.56L378.45 378.43L377.87 379.01L377 379.3L376.13 379.3L375.26 379.01L374.97 378.72L374.68 378.14M381.06 379.3L380.77 379.01L381.06 378.72L381.35 379.01L381.35 379.59L381.06 380.17L380.77 380.46M388.89 374.37L389.47 374.08L390.34 373.21L390.34 379.3M394.11 374.66L394.11 374.37L394.4 373.79L394.69 373.5L395.27 373.21L396.43 373.21L397.01 373.5L397.3 373.79L397.59 374.37L397.59 374.95L397.3 375.53L396.72 376.4L393.82 379.3L397.88 379.3M403.39 374.08L403.1 373.5L402.23 373.21L401.65 373.21L400.78 373.5L400.2 374.37L399.91 375.82L399.91 377.27L400.2 378.43L400.78 379.01L401.65 379.3L401.94 379.3L402.81 379.01L403.39 378.43L403.68 377.56L403.68 377.27L403.39 376.4L402.81 375.82L401.94 375.53L401.65 375.53L400.78 375.82L400.2 376.4L399.91 377.27M406 378.72L405.71 379.01L406 379.3L406.29 379.01L406 378.72M408.9 373.21L412.09 373.21L410.35 375.53L411.22 375.53L411.8 375.82L412.09 376.11L412.38 376.98L412.38 377.56L412.09 378.43L411.51 379.01L410.64 379.3L409.77 379.3L408.9 379.01L408.61 378.72L408.32 378.14M414.99 374.37L415.57 374.08L416.44 373.21L416.44 379.3M421.66 373.21L420.79 373.5L420.21 374.37L419.92 375.82L419.92 376.69L420.21 378.14L420.79 379.01L421.66 379.3L422.24 379.3L423.11 379.01L423.69 378.14L423.98 376.69L423.98 375.82L423.69 374.37L423.11 373.5L422.24 373.21L421.66 373.21M426.3 379.3L426.01 379.01L426.3 378.72L426.59 379.01L426.59 379.59L426.3 380.17L426.01 380.46M433.55 376.69L438.77 376.69M443.7 373.21L440.8 377.27L445.15 377.27M443.7 373.21L443.7 379.3M447.47 374.37L448.05 374.08L448.92 373.21L448.92 379.3M454.14 373.21L453.27 373.5L452.69 374.37L452.4 375.82L452.4 376.69L452.69 378.14L453.27 379.01L454.14 379.3L454.72 379.3L455.59 379.01L456.17 378.14L456.46 376.69L456.46 375.82L456.17 374.37L455.59 373.5L454.72 373.21L454.14 373.21M458.78 378.72L458.49 379.01L458.78 379.3L459.07 379.01L458.78 378.72M462.55 373.21L461.68 373.5L461.39 374.08L461.39 374.66L461.68 375.24L462.26 375.53L463.42 375.82L464.29 376.11L464.87 376.69L465.16 377.27L465.16 378.14L464.87 378.72L464.58 379.01L463.71 379.3L462.55 379.3L461.68 379.01L461.39 378.72L461.1 378.14L461.1 377.27L461.39 376.69L461.97 376.11L462.84 375.82L464 375.53L464.58 375.24L464.87 374.66L464.87 374.08L464.58 373.5L463.71 373.21L462.55 373.21M470.38 373.21L467.48 373.21L467.19 375.82L467.48 375.53L468.35 375.24L469.22 375.24L470.09 375.53L470.67 376.11L470.96 376.98L470.96 377.56L470.67 378.43L470.09 379.01L469.22 379.3L468.35 379.3L467.48 379.01L467.19 378.72L466.9 378.14M476.76 373.21L473.86 379.3M472.7 373.21L476.76 373.21M478.5 372.05L479.08 372.63L479.66 373.5L480.24 374.66L480.53 376.11L480.53 377.27L480.24 378.72L479.66 379.88L479.08 380.75L478.5 381.33" stroke="#fff" stroke-width="1.15" opacity="1"/>
<path d="M559.56 281.51L559.56 287.6M561.88 283.54L561.88 287.6M561.88 284.7L562.75 283.83L563.33 283.54L564.2 283.54L564.78 283.83L565.07 284.7L565.07 287.6M565.07 284.7L565.94 283.83L566.52 283.54L567.39 283.54L567.97 283.83L568.26 284.7L568.26 287.6M573.77 283.54L573.77 287.6M573.77 284.41L573.19 283.83L572.61 283.54L571.74 283.54L571.16 283.83L570.58 284.41L570.29 285.28L570.29 285.86L570.58 286.73L571.16 287.31L571.74 287.6L572.61 287.6L573.19 287.31L573.77 286.73M579.28 283.54L579.28 288.18L578.99 289.05L578.7 289.34L578.12 289.63L577.25 289.63L576.67 289.34M579.28 284.41L578.7 283.83L578.12 283.54L577.25 283.54L576.67 283.83L576.09 284.41L575.8 285.28L575.8 285.86L576.09 286.73L576.67 287.31L577.25 287.6L578.12 287.6L578.7 287.31L579.28 286.73M581.31 285.28L584.79 285.28L584.79 284.7L584.5 284.12L584.21 283.83L583.63 283.54L582.76 283.54L582.18 283.83L581.6 284.41L581.31 285.28L581.31 285.86L581.6 286.73L582.18 287.31L582.76 287.6L583.63 287.6L584.21 287.31L584.79 286.73M591.46 283.54L591.46 287.6M591.46 285.28L591.75 284.41L592.33 283.83L592.91 283.54L593.78 283.54M594.94 285.28L598.42 285.28L598.42 284.7L598.13 284.12L597.84 283.83L597.26 283.54L596.39 283.54L595.81 283.83L595.23 284.41L594.94 285.28L594.94 285.86L595.23 286.73L595.81 287.31L596.39 287.6L597.26 287.6L597.84 287.31L598.42 286.73M603.64 283.54L603.64 288.18L603.35 289.05L603.06 289.34L602.48 289.63L601.61 289.63L601.03 289.34M603.64 284.41L603.06 283.83L602.48 283.54L601.61 283.54L601.03 283.83L600.45 284.41L600.16 285.28L600.16 285.86L600.45 286.73L601.03 287.31L601.61 287.6L602.48 287.6L603.06 287.31L603.64 286.73M605.67 281.51L605.96 281.8L606.25 281.51L605.96 281.22L605.67 281.51M605.96 283.54L605.96 287.6M609.44 283.54L608.86 283.83L608.28 284.41L607.99 285.28L607.99 285.86L608.28 286.73L608.86 287.31L609.44 287.6L610.31 287.6L610.89 287.31L611.47 286.73L611.76 285.86L611.76 285.28L611.47 284.41L610.89 283.83L610.31 283.54L609.44 283.54M613.79 283.54L613.79 287.6M613.79 284.7L614.66 283.83L615.24 283.54L616.11 283.54L616.69 283.83L616.98 284.7L616.98 287.6M622.2 284.41L621.91 283.83L621.04 283.54L620.17 283.54L619.3 283.83L619.01 284.41L619.3 284.99L619.88 285.28L621.33 285.57L621.91 285.86L622.2 286.44L622.2 286.73L621.91 287.31L621.04 287.6L620.17 287.6L619.3 287.31L619.01 286.73M632.06 284.41L631.48 283.83L630.9 283.54L630.03 283.54L629.45 283.83L628.87 284.41L628.58 285.28L628.58 285.86L628.87 286.73L629.45 287.31L630.03 287.6L630.9 287.6L631.48 287.31L632.06 286.73M635.25 283.54L634.67 283.83L634.09 284.41L633.8 285.28L633.8 285.86L634.09 286.73L634.67 287.31L635.25 287.6L636.12 287.6L636.7 287.31L637.28 286.73L637.57 285.86L637.57 285.28L637.28 284.41L636.7 283.83L636.12 283.54L635.25 283.54M639.02 283.54L640.76 287.6M642.5 283.54L640.76 287.6M643.95 285.28L647.43 285.28L647.43 284.7L647.14 284.12L646.85 283.83L646.27 283.54L645.4 283.54L644.82 283.83L644.24 284.41L643.95 285.28L643.95 285.86L644.24 286.73L644.82 287.31L645.4 287.6L646.27 287.6L646.85 287.31L647.43 286.73M649.46 283.54L649.46 287.6M649.46 285.28L649.75 284.41L650.33 283.83L650.91 283.54L651.78 283.54M652.94 285.28L656.42 285.28L656.42 284.7L656.13 284.12L655.84 283.83L655.26 283.54L654.39 283.54L653.81 283.83L653.23 284.41L652.94 285.28L652.94 285.86L653.23 286.73L653.81 287.31L654.39 287.6L655.26 287.6L655.84 287.31L656.42 286.73M661.64 281.51L661.64 287.6M661.64 284.41L661.06 283.83L660.48 283.54L659.61 283.54L659.03 283.83L658.45 284.41L658.16 285.28L658.16 285.86L658.45 286.73L659.03 287.31L659.61 287.6L660.48 287.6L661.06 287.31L661.64 286.73M664.25 283.54L663.96 283.83L664.25 284.12L664.54 283.83L664.25 283.54M664.25 287.02L663.96 287.31L664.25 287.6L664.54 287.31L664.25 287.02" stroke="#fff" stroke-width="1.15" opacity="1"/>
<path d="M563.33 296.51L559.27 302.6M559.27 296.51L563.33 296.51M559.27 302.6L563.33 302.6M566.52 298.54L565.94 298.83L565.36 299.41L565.07 300.28L565.07 300.86L565.36 301.73L565.94 302.31L566.52 302.6L567.39 302.6L567.97 302.31L568.55 301.73L568.84 300.86L568.84 300.28L568.55 299.41L567.97 298.83L567.39 298.54L566.52 298.54M572.03 298.54L571.45 298.83L570.87 299.41L570.58 300.28L570.58 300.86L570.87 301.73L571.45 302.31L572.03 302.6L572.9 302.6L573.48 302.31L574.06 301.73L574.35 300.86L574.35 300.28L574.06 299.41L573.48 298.83L572.9 298.54L572.03 298.54M576.38 298.54L576.38 302.6M576.38 299.7L577.25 298.83L577.83 298.54L578.7 298.54L579.28 298.83L579.57 299.7L579.57 302.6M579.57 299.7L580.44 298.83L581.02 298.54L581.89 298.54L582.47 298.83L582.76 299.7L582.76 302.6M589.72 295.35L584.5 304.63M591.46 296.51L591.46 302.6M591.46 296.51L595.23 296.51M591.46 299.41L593.78 299.41M597.84 298.54L597.26 298.83L596.68 299.41L596.39 300.28L596.39 300.86L596.68 301.73L597.26 302.31L597.84 302.6L598.71 302.6L599.29 302.31L599.87 301.73L600.16 300.86L600.16 300.28L599.87 299.41L599.29 298.83L598.71 298.54L597.84 298.54M605.38 299.41L604.8 298.83L604.22 298.54L603.35 298.54L602.77 298.83L602.19 299.41L601.9 300.28L601.9 300.86L602.19 301.73L602.77 302.31L603.35 302.6L604.22 302.6L604.8 302.31L605.38 301.73M607.41 298.54L607.41 301.44L607.7 302.31L608.28 302.6L609.15 302.6L609.73 302.31L610.6 301.44M610.6 298.54L610.6 302.6M615.82 299.41L615.53 298.83L614.66 298.54L613.79 298.54L612.92 298.83L612.63 299.41L612.92 299.99L613.5 300.28L614.95 300.57L615.53 300.86L615.82 301.44L615.82 301.73L615.53 302.31L614.66 302.6L613.79 302.6L612.92 302.31L612.63 301.73M622.49 296.51L622.49 302.6M624.52 300.28L628 300.28L628 299.7L627.71 299.12L627.42 298.83L626.84 298.54L625.97 298.54L625.39 298.83L624.81 299.41L624.52 300.28L624.52 300.86L624.81 301.73L625.39 302.31L625.97 302.6L626.84 302.6L627.42 302.31L628 301.73M629.45 298.54L631.19 302.6M632.93 298.54L631.19 302.6M634.38 300.28L637.86 300.28L637.86 299.7L637.57 299.12L637.28 298.83L636.7 298.54L635.83 298.54L635.25 298.83L634.67 299.41L634.38 300.28L634.38 300.86L634.67 301.73L635.25 302.31L635.83 302.6L636.7 302.6L637.28 302.31L637.86 301.73M639.89 296.51L639.89 302.6M645.11 299.41L644.82 298.83L643.95 298.54L643.08 298.54L642.21 298.83L641.92 299.41L642.21 299.99L642.79 300.28L644.24 300.57L644.82 300.86L645.11 301.44L645.11 301.73L644.82 302.31L643.95 302.6L643.08 302.6L642.21 302.31L641.92 301.73M654.97 299.41L654.39 298.83L653.81 298.54L652.94 298.54L652.36 298.83L651.78 299.41L651.49 300.28L651.49 300.86L651.78 301.73L652.36 302.31L652.94 302.6L653.81 302.6L654.39 302.31L654.97 301.73M658.16 298.54L657.58 298.83L657 299.41L656.71 300.28L656.71 300.86L657 301.73L657.58 302.31L658.16 302.6L659.03 302.6L659.61 302.31L660.19 301.73L660.48 300.86L660.48 300.28L660.19 299.41L659.61 298.83L659.03 298.54L658.16 298.54M661.93 298.54L663.67 302.6M665.41 298.54L663.67 302.6M666.86 300.28L670.34 300.28L670.34 299.7L670.05 299.12L669.76 298.83L669.18 298.54L668.31 298.54L667.73 298.83L667.15 299.41L666.86 300.28L666.86 300.86L667.15 301.73L667.73 302.31L668.31 302.6L669.18 302.6L669.76 302.31L670.34 301.73M672.37 298.54L672.37 302.6M672.37 300.28L672.66 299.41L673.24 298.83L673.82 298.54L674.69 298.54M675.85 300.28L679.33 300.28L679.33 299.7L679.04 299.12L678.75 298.83L678.17 298.54L677.3 298.54L676.72 298.83L676.14 299.41L675.85 300.28L675.85 300.86L676.14 301.73L676.72 302.31L677.3 302.6L678.17 302.6L678.75 302.31L679.33 301.73M684.55 296.51L684.55 302.6M684.55 299.41L683.97 298.83L683.39 298.54L682.52 298.54L681.94 298.83L681.36 299.41L681.07 300.28L681.07 300.86L681.36 301.73L681.94 302.31L682.52 302.6L683.39 302.6L683.97 302.31L684.55 301.73M687.16 298.54L686.87 298.83L687.16 299.12L687.45 298.83L687.16 298.54M687.16 302.02L686.87 302.31L687.16 302.6L687.45 302.31L687.16 302.02" stroke="#fff" stroke-width="1.15" opacity="1"/>
<path d="M707.65 281.51L710.84 281.51L709.1 283.83L709.97 283.83L710.55 284.12L710.84 284.41L711.13 285.28L711.13 285.86L710.84 286.73L710.26 287.31L709.39 287.6L708.52 287.6L707.65 287.31L707.36 287.02L707.07 286.44M716.35 281.51L713.45 281.51L713.16 284.12L713.45 283.83L714.32 283.54L715.19 283.54L716.06 283.83L716.64 284.41L716.93 285.28L716.93 285.86L716.64 286.73L716.06 287.31L715.19 287.6L714.32 287.6L713.45 287.31L713.16 287.02L712.87 286.44M723.89 281.51L718.67 287.6M720.12 281.51L720.7 282.09L720.7 282.67L720.41 283.25L719.83 283.54L719.25 283.54L718.67 282.96L718.67 282.38L718.96 281.8L719.54 281.51L720.12 281.51L720.7 281.8L721.57 282.09L722.44 282.09L723.31 281.8L723.89 281.51M722.73 285.57L722.15 285.86L721.86 286.44L721.86 287.02L722.44 287.6L723.02 287.6L723.6 287.31L723.89 286.73L723.89 286.15L723.31 285.57L722.73 285.57" stroke="#fff" stroke-width="1.15" opacity="1"/>
<path d="M707.65 296.51L710.84 296.51L709.1 298.83L709.97 298.83L710.55 299.12L710.84 299.41L711.13 300.28L711.13 300.86L710.84 301.73L710.26 302.31L709.39 302.6L708.52 302.6L707.65 302.31L707.36 302.02L707.07 301.44M716.35 296.51L713.45 296.51L713.16 299.12L713.45 298.83L714.32 298.54L715.19 298.54L716.06 298.83L716.64 299.41L716.93 300.28L716.93 300.86L716.64 301.73L716.06 302.31L715.19 302.6L714.32 302.6L713.45 302.31L713.16 302.02L712.87 301.44M723.89 296.51L718.67 302.6M720.12 296.51L720.7 297.09L720.7 297.67L720.41 298.25L719.83 298.54L719.25 298.54L718.67 297.96L718.67 297.38L718.96 296.8L719.54 296.51L720.12 296.51L720.7 296.8L721.57 297.09L722.44 297.09L723.31 296.8L723.89 296.51M722.73 300.57L722.15 300.86L721.86 301.44L721.86 302.02L722.44 302.6L723.02 302.6L723.6 302.31L723.89 301.73L723.89 301.15L723.31 300.57L722.73 300.57" stroke="#fff" stroke-width="1.15" opacity="1"/>
<path d="M559.56 342.71L559.56 348.8M559.56 342.71L562.17 342.71L563.04 343L563.33 343.29L563.62 343.87L563.62 344.74L563.33 345.32L563.04 345.61L562.17 345.9L559.56 345.9M568.84 344.74L568.84 348.8M568.84 345.61L568.26 345.03L567.68 344.74L566.81 344.74L566.23 345.03L565.65 345.61L565.36 346.48L565.36 347.06L565.65 347.93L566.23 348.51L566.81 348.8L567.68 348.8L568.26 348.51L568.84 347.93M571.16 344.74L571.16 348.8M571.16 345.9L572.03 345.03L572.61 344.74L573.48 344.74L574.06 345.03L574.35 345.9L574.35 348.8M576.96 344.74L576.67 345.03L576.96 345.32L577.25 345.03L576.96 344.74M576.96 348.22L576.67 348.51L576.96 348.8L577.25 348.51L576.96 348.22M584.5 342.71L587.69 342.71L585.95 345.03L586.82 345.03L587.4 345.32L587.69 345.61L587.98 346.48L587.98 347.06L587.69 347.93L587.11 348.51L586.24 348.8L585.37 348.8L584.5 348.51L584.21 348.22L583.92 347.64M593.2 342.71L590.3 342.71L590.01 345.32L590.3 345.03L591.17 344.74L592.04 344.74L592.91 345.03L593.49 345.61L593.78 346.48L593.78 347.06L593.49 347.93L592.91 348.51L592.04 348.8L591.17 348.8L590.3 348.51L590.01 348.22L589.72 347.64M596.97 342.71L596.1 343L595.81 343.58L595.81 344.16L596.1 344.74L596.68 345.03L597.84 345.32L598.71 345.61L599.29 346.19L599.58 346.77L599.58 347.64L599.29 348.22L599 348.51L598.13 348.8L596.97 348.8L596.1 348.51L595.81 348.22L595.52 347.64L595.52 346.77L595.81 346.19L596.39 345.61L597.26 345.32L598.42 345.03L599 344.74L599.29 344.16L599.29 343.58L599 343L598.13 342.71L596.97 342.71M601.9 348.22L601.61 348.51L601.9 348.8L602.19 348.51L601.9 348.22M607.12 342.71L604.22 346.77L608.57 346.77M607.12 342.71L607.12 348.8M611.76 342.71L610.89 343L610.31 343.87L610.02 345.32L610.02 346.19L610.31 347.64L610.89 348.51L611.76 348.8L612.34 348.8L613.21 348.51L613.79 347.64L614.08 346.19L614.08 345.32L613.79 343.87L613.21 343L612.34 342.71L611.76 342.71M616.4 348.8L616.11 348.51L616.4 348.22L616.69 348.51L616.69 349.09L616.4 349.67L616.11 349.96M624.81 342.71L624.81 348.8M622.78 342.71L626.84 342.71M628 342.71L628.29 343L628.58 342.71L628.29 342.42L628 342.71M628.29 344.74L628.29 348.8M630.61 342.71L630.61 348.8M633.22 342.71L633.22 347.64L633.51 348.51L634.09 348.8L634.67 348.8M632.35 344.74L634.38 344.74M636.7 344.74L636.41 345.03L636.7 345.32L636.99 345.03L636.7 344.74M636.7 348.22L636.41 348.51L636.7 348.8L636.99 348.51L636.7 348.22M643.95 346.19L649.17 346.19M654.1 342.71L651.2 346.77L655.55 346.77M654.1 342.71L654.1 348.8M657.58 348.22L657.29 348.51L657.58 348.8L657.87 348.51L657.58 348.22M660.19 344.16L660.19 343.87L660.48 343.29L660.77 343L661.35 342.71L662.51 342.71L663.09 343L663.38 343.29L663.67 343.87L663.67 344.45L663.38 345.03L662.8 345.9L659.9 348.8L663.96 348.8M669.18 342.71L666.28 342.71L665.99 345.32L666.28 345.03L667.15 344.74L668.02 344.74L668.89 345.03L669.47 345.61L669.76 346.48L669.76 347.06L669.47 347.93L668.89 348.51L668.02 348.8L667.15 348.8L666.28 348.51L665.99 348.22L665.7 347.64M672.08 348.8L671.79 348.51L672.08 348.22L672.37 348.51L672.37 349.09L672.08 349.67L671.79 349.96M679.33 342.71L679.33 348.8M679.33 342.71L681.94 342.71L682.81 343L683.1 343.29L683.39 343.87L683.39 344.45L683.1 345.03L682.81 345.32L681.94 345.61L679.33 345.61M681.36 345.61L683.39 348.8M686.58 344.74L686 345.03L685.42 345.61L685.13 346.48L685.13 347.06L685.42 347.93L686 348.51L686.58 348.8L687.45 348.8L688.03 348.51L688.61 347.93L688.9 347.06L688.9 346.48L688.61 345.61L688.03 345.03L687.45 344.74L686.58 344.74M690.93 342.71L690.93 348.8M693.25 342.71L693.25 348.8M695.86 344.74L695.57 345.03L695.86 345.32L696.15 345.03L695.86 344.74M695.86 348.22L695.57 348.51L695.86 348.8L696.15 348.51L695.86 348.22M703.11 346.19L708.33 346.19M711.23 343.87L711.81 343.58L712.68 342.71L712.68 348.8M716.74 348.22L716.45 348.51L716.74 348.8L717.03 348.51L716.74 348.22M720.8 342.71L719.93 343L719.35 343.87L719.06 345.32L719.06 346.19L719.35 347.64L719.93 348.51L720.8 348.8L721.38 348.8L722.25 348.51L722.83 347.64L723.12 346.19L723.12 345.32L722.83 343.87L722.25 343L721.38 342.71L720.8 342.71M725.15 344.16L725.15 343.87L725.44 343.29L725.73 343L726.31 342.71L727.47 342.71L728.05 343L728.34 343.29L728.63 343.87L728.63 344.45L728.34 345.03L727.76 345.9L724.86 348.8L728.92 348.8" stroke="#fff" stroke-width="1.15" opacity="1"/>
<path d="M559.27 358.21L563.33 364.3M563.33 358.21L559.27 364.3M565.65 360.24L565.36 360.53L565.65 360.82L565.94 360.53L565.65 360.24M565.65 363.72L565.36 364.01L565.65 364.3L565.94 364.01L565.65 363.72M575.51 358.21L572.61 362.27L576.96 362.27M575.51 358.21L575.51 364.3M578.7 359.66L578.7 359.37L578.99 358.79L579.28 358.5L579.86 358.21L581.02 358.21L581.6 358.5L581.89 358.79L582.18 359.37L582.18 359.95L581.89 360.53L581.31 361.4L578.41 364.3L582.47 364.3M584.79 363.72L584.5 364.01L584.79 364.3L585.08 364.01L584.79 363.72M587.98 359.37L588.56 359.08L589.43 358.21L589.43 364.3M593.2 359.66L593.2 359.37L593.49 358.79L593.78 358.5L594.36 358.21L595.52 358.21L596.1 358.5L596.39 358.79L596.68 359.37L596.68 359.95L596.39 360.53L595.81 361.4L592.91 364.3L596.97 364.3M599 359.66L599 359.37L599.29 358.79L599.58 358.5L600.16 358.21L601.32 358.21L601.9 358.5L602.19 358.79L602.48 359.37L602.48 359.95L602.19 360.53L601.61 361.4L598.71 364.3L602.77 364.3M605.09 364.3L604.8 364.01L605.09 363.72L605.38 364.01L605.38 364.59L605.09 365.17L604.8 365.46M611.47 358.21L613.79 361.11L613.79 364.3M616.11 358.21L613.79 361.11M617.85 360.24L617.56 360.53L617.85 360.82L618.14 360.53L617.85 360.24M617.85 363.72L617.56 364.01L617.85 364.3L618.14 364.01L617.85 363.72M625.68 359.37L626.26 359.08L627.13 358.21L627.13 364.3M631.19 358.21L634.38 358.21L632.64 360.53L633.51 360.53L634.09 360.82L634.38 361.11L634.67 361.98L634.67 362.56L634.38 363.43L633.8 364.01L632.93 364.3L632.06 364.3L631.19 364.01L630.9 363.72L630.61 363.14M639.31 358.21L636.41 362.27L640.76 362.27M639.31 358.21L639.31 364.3M642.79 363.72L642.5 364.01L642.79 364.3L643.08 364.01L642.79 363.72M645.4 359.66L645.4 359.37L645.69 358.79L645.98 358.5L646.56 358.21L647.72 358.21L648.3 358.5L648.59 358.79L648.88 359.37L648.88 359.95L648.59 360.53L648.01 361.4L645.11 364.3L649.17 364.3M654.68 360.24L654.39 361.11L653.81 361.69L652.94 361.98L652.65 361.98L651.78 361.69L651.2 361.11L650.91 360.24L650.91 359.95L651.2 359.08L651.78 358.5L652.65 358.21L652.94 358.21L653.81 358.5L654.39 359.08L654.68 360.24L654.68 361.69L654.39 363.14L653.81 364.01L652.94 364.3L652.36 364.3L651.49 364.01L651.2 363.43M658.16 358.21L657.29 358.5L657 359.08L657 359.66L657.29 360.24L657.87 360.53L659.03 360.82L659.9 361.11L660.48 361.69L660.77 362.27L660.77 363.14L660.48 363.72L660.19 364.01L659.32 364.3L658.16 364.3L657.29 364.01L657 363.72L656.71 363.14L656.71 362.27L657 361.69L657.58 361.11L658.45 360.82L659.61 360.53L660.19 360.24L660.48 359.66L660.48 359.08L660.19 358.5L659.32 358.21L658.16 358.21M663.09 364.3L662.8 364.01L663.09 363.72L663.38 364.01L663.38 364.59L663.09 365.17L662.8 365.46M674.11 358.21L670.05 364.3M670.05 358.21L674.11 358.21M670.05 364.3L674.11 364.3M676.43 360.24L676.14 360.53L676.43 360.82L676.72 360.53L676.43 360.24M676.43 363.72L676.14 364.01L676.43 364.3L676.72 364.01L676.43 363.72M683.68 361.69L688.9 361.69M691.51 358.21L694.7 358.21L692.96 360.53L693.83 360.53L694.41 360.82L694.7 361.11L694.99 361.98L694.99 362.56L694.7 363.43L694.12 364.01L693.25 364.3L692.38 364.3L691.51 364.01L691.22 363.72L690.93 363.14M698.18 358.21L697.31 358.5L697.02 359.08L697.02 359.66L697.31 360.24L697.89 360.53L699.05 360.82L699.92 361.11L700.5 361.69L700.79 362.27L700.79 363.14L700.5 363.72L700.21 364.01L699.34 364.3L698.18 364.3L697.31 364.01L697.02 363.72L696.73 363.14L696.73 362.27L697.02 361.69L697.6 361.11L698.47 360.82L699.63 360.53L700.21 360.24L700.5 359.66L700.5 359.08L700.21 358.5L699.34 358.21L698.18 358.21M703.11 363.72L702.82 364.01L703.11 364.3L703.4 364.01L703.11 363.72M707.17 358.21L706.3 358.5L705.72 359.37L705.43 360.82L705.43 361.69L705.72 363.14L706.3 364.01L707.17 364.3L707.75 364.3L708.62 364.01L709.2 363.14L709.49 361.69L709.49 360.82L709.2 359.37L708.62 358.5L707.75 358.21L707.17 358.21M715 360.24L714.71 361.11L714.13 361.69L713.26 361.98L712.97 361.98L712.1 361.69L711.52 361.11L711.23 360.24L711.23 359.95L711.52 359.08L712.1 358.5L712.97 358.21L713.26 358.21L714.13 358.5L714.71 359.08L715 360.24L715 361.69L714.71 363.14L714.13 364.01L713.26 364.3L712.68 364.3L711.81 364.01L711.52 363.43M719.93 358.21L717.03 362.27L721.38 362.27M719.93 358.21L719.93 364.3" stroke="#fff" stroke-width="1.15" opacity="1"/>
<path d="M563.33 373.61L559.27 379.7M559.27 373.61L563.33 373.61M559.27 379.7L563.33 379.7M566.52 375.64L565.94 375.93L565.36 376.51L565.07 377.38L565.07 377.96L565.36 378.83L565.94 379.41L566.52 379.7L567.39 379.7L567.97 379.41L568.55 378.83L568.84 377.96L568.84 377.38L568.55 376.51L567.97 375.93L567.39 375.64L566.52 375.64M572.03 375.64L571.45 375.93L570.87 376.51L570.58 377.38L570.58 377.96L570.87 378.83L571.45 379.41L572.03 379.7L572.9 379.7L573.48 379.41L574.06 378.83L574.35 377.96L574.35 377.38L574.06 376.51L573.48 375.93L572.9 375.64L572.03 375.64M576.38 375.64L576.38 379.7M576.38 376.8L577.25 375.93L577.83 375.64L578.7 375.64L579.28 375.93L579.57 376.8L579.57 379.7M579.57 376.8L580.44 375.93L581.02 375.64L581.89 375.64L582.47 375.93L582.76 376.8L582.76 379.7M585.37 375.64L585.08 375.93L585.37 376.22L585.66 375.93L585.37 375.64M585.37 379.12L585.08 379.41L585.37 379.7L585.66 379.41L585.37 379.12M594.07 373.61L593.2 373.9L592.62 374.77L592.33 376.22L592.33 377.09L592.62 378.54L593.2 379.41L594.07 379.7L594.65 379.7L595.52 379.41L596.1 378.54L596.39 377.09L596.39 376.22L596.1 374.77L595.52 373.9L594.65 373.61L594.07 373.61M598.71 379.12L598.42 379.41L598.71 379.7L599 379.41L598.71 379.12M601.32 375.06L601.32 374.77L601.61 374.19L601.9 373.9L602.48 373.61L603.64 373.61L604.22 373.9L604.51 374.19L604.8 374.77L604.8 375.35L604.51 375.93L603.93 376.8L601.03 379.7L605.09 379.7M609.73 373.61L606.83 377.67L611.18 377.67M609.73 373.61L609.73 379.7M613.21 373.61L616.4 373.61L614.66 375.93L615.53 375.93L616.11 376.22L616.4 376.51L616.69 377.38L616.69 377.96L616.4 378.83L615.82 379.41L614.95 379.7L614.08 379.7L613.21 379.41L612.92 379.12L612.63 378.54M619.01 379.7L618.72 379.41L619.01 379.12L619.3 379.41L619.3 379.99L619.01 380.57L618.72 380.86M626.26 373.61L626.26 379.7M626.26 373.61L630.03 373.61M626.26 376.51L628.58 376.51M632.64 375.64L632.06 375.93L631.48 376.51L631.19 377.38L631.19 377.96L631.48 378.83L632.06 379.41L632.64 379.7L633.51 379.7L634.09 379.41L634.67 378.83L634.96 377.96L634.96 377.38L634.67 376.51L634.09 375.93L633.51 375.64L632.64 375.64M640.18 376.51L639.6 375.93L639.02 375.64L638.15 375.64L637.57 375.93L636.99 376.51L636.7 377.38L636.7 377.96L636.99 378.83L637.57 379.41L638.15 379.7L639.02 379.7L639.6 379.41L640.18 378.83M642.21 375.64L642.21 378.54L642.5 379.41L643.08 379.7L643.95 379.7L644.53 379.41L645.4 378.54M645.4 375.64L645.4 379.7M650.62 376.51L650.33 375.93L649.46 375.64L648.59 375.64L647.72 375.93L647.43 376.51L647.72 377.09L648.3 377.38L649.75 377.67L650.33 377.96L650.62 378.54L650.62 378.83L650.33 379.41L649.46 379.7L648.59 379.7L647.72 379.41L647.43 378.83M652.94 375.64L652.65 375.93L652.94 376.22L653.23 375.93L652.94 375.64M652.94 379.12L652.65 379.41L652.94 379.7L653.23 379.41L652.94 379.12M661.64 373.61L660.77 373.9L660.19 374.77L659.9 376.22L659.9 377.09L660.19 378.54L660.77 379.41L661.64 379.7L662.22 379.7L663.09 379.41L663.67 378.54L663.96 377.09L663.96 376.22L663.67 374.77L663.09 373.9L662.22 373.61L661.64 373.61M666.28 379.12L665.99 379.41L666.28 379.7L666.57 379.41L666.28 379.12M672.37 375.64L672.08 376.51L671.5 377.09L670.63 377.38L670.34 377.38L669.47 377.09L668.89 376.51L668.6 375.64L668.6 375.35L668.89 374.48L669.47 373.9L670.34 373.61L670.63 373.61L671.5 373.9L672.08 374.48L672.37 375.64L672.37 377.09L672.08 378.54L671.5 379.41L670.63 379.7L670.05 379.7L669.18 379.41L668.89 378.83M678.17 375.64L677.88 376.51L677.3 377.09L676.43 377.38L676.14 377.38L675.27 377.09L674.69 376.51L674.4 375.64L674.4 375.35L674.69 374.48L675.27 373.9L676.14 373.61L676.43 373.61L677.3 373.9L677.88 374.48L678.17 375.64L678.17 377.09L677.88 378.54L677.3 379.41L676.43 379.7L675.85 379.7L674.98 379.41L674.69 378.83M683.97 375.64L683.68 376.51L683.1 377.09L682.23 377.38L681.94 377.38L681.07 377.09L680.49 376.51L680.2 375.64L680.2 375.35L680.49 374.48L681.07 373.9L681.94 373.61L682.23 373.61L683.1 373.9L683.68 374.48L683.97 375.64L683.97 377.09L683.68 378.54L683.1 379.41L682.23 379.7L681.65 379.7L680.78 379.41L680.49 378.83" stroke="#fff" stroke-width="1.15" opacity="1"/>
<path d="M558.48 394.78L558.48 399.4M558.48 394.78L560.46 394.78L561.12 395L561.34 395.22L561.56 395.66L561.56 396.1L561.34 396.54L561.12 396.76L560.46 396.98L558.48 396.98M560.02 396.98L561.56 399.4M563.98 396.32L563.54 396.54L563.1 396.98L562.88 397.64L562.88 398.08L563.1 398.74L563.54 399.18L563.98 399.4L564.64 399.4L565.08 399.18L565.52 398.74L565.74 398.08L565.74 397.64L565.52 396.98L565.08 396.54L564.64 396.32L563.98 396.32M567.5 394.78L567.5 398.52L567.72 399.18L568.16 399.4L568.6 399.4M566.84 396.32L568.38 396.32M572.34 396.32L572.34 399.4M572.34 396.98L571.9 396.54L571.46 396.32L570.8 396.32L570.36 396.54L569.92 396.98L569.7 397.64L569.7 398.08L569.92 398.74L570.36 399.18L570.8 399.4L571.46 399.4L571.9 399.18L572.34 398.74M574.32 394.78L574.32 398.52L574.54 399.18L574.98 399.4L575.42 399.4M573.66 396.32L575.2 396.32M576.52 394.78L576.74 395L576.96 394.78L576.74 394.56L576.52 394.78M576.74 396.32L576.74 399.4M579.38 396.32L578.94 396.54L578.5 396.98L578.28 397.64L578.28 398.08L578.5 398.74L578.94 399.18L579.38 399.4L580.04 399.4L580.48 399.18L580.92 398.74L581.14 398.08L581.14 397.64L580.92 396.98L580.48 396.54L580.04 396.32L579.38 396.32M582.68 396.32L582.68 399.4M582.68 397.2L583.34 396.54L583.78 396.32L584.44 396.32L584.88 396.54L585.1 397.2L585.1 399.4M592.8 396.98L592.36 396.54L591.92 396.32L591.26 396.32L590.82 396.54L590.38 396.98L590.16 397.64L590.16 398.08L590.38 398.74L590.82 399.18L591.26 399.4L591.92 399.4L592.36 399.18L592.8 398.74M594.34 394.78L594.34 399.4M594.34 397.2L595 396.54L595.44 396.32L596.1 396.32L596.54 396.54L596.76 397.2L596.76 399.4M600.94 396.32L600.94 399.4M600.94 396.98L600.5 396.54L600.06 396.32L599.4 396.32L598.96 396.54L598.52 396.98L598.3 397.64L598.3 398.08L598.52 398.74L598.96 399.18L599.4 399.4L600.06 399.4L600.5 399.18L600.94 398.74M602.7 396.32L602.7 399.4M602.7 397.2L603.36 396.54L603.8 396.32L604.46 396.32L604.9 396.54L605.12 397.2L605.12 399.4M609.3 396.32L609.3 399.84L609.08 400.5L608.86 400.72L608.42 400.94L607.76 400.94L607.32 400.72M609.3 396.98L608.86 396.54L608.42 396.32L607.76 396.32L607.32 396.54L606.88 396.98L606.66 397.64L606.66 398.08L606.88 398.74L607.32 399.18L607.76 399.4L608.42 399.4L608.86 399.18L609.3 398.74M610.84 397.64L613.48 397.64L613.48 397.2L613.26 396.76L613.04 396.54L612.6 396.32L611.94 396.32L611.5 396.54L611.06 396.98L610.84 397.64L610.84 398.08L611.06 398.74L611.5 399.18L611.94 399.4L612.6 399.4L613.04 399.18L613.48 398.74M615.24 396.32L615.02 396.54L615.24 396.76L615.46 396.54L615.24 396.32M615.24 398.96L615.02 399.18L615.24 399.4L615.46 399.18L615.24 398.96M621.84 394.78L621.18 395L620.74 395.66L620.52 396.76L620.52 397.42L620.74 398.52L621.18 399.18L621.84 399.4L622.28 399.4L622.94 399.18L623.38 398.52L623.6 397.42L623.6 396.76L623.38 395.66L622.94 395L622.28 394.78L621.84 394.78M625.36 398.96L625.14 399.18L625.36 399.4L625.58 399.18L625.36 398.96M628.44 394.78L627.78 395L627.34 395.66L627.12 396.76L627.12 397.42L627.34 398.52L627.78 399.18L628.44 399.4L628.88 399.4L629.54 399.18L629.98 398.52L630.2 397.42L630.2 396.76L629.98 395.66L629.54 395L628.88 394.78L628.44 394.78M632.84 394.78L632.18 395L631.74 395.66L631.52 396.76L631.52 397.42L631.74 398.52L632.18 399.18L632.84 399.4L633.28 399.4L633.94 399.18L634.38 398.52L634.6 397.42L634.6 396.76L634.38 395.66L633.94 395L633.28 394.78L632.84 394.78M636.58 395.66L637.02 395.44L637.68 394.78L637.68 399.4" stroke="#3dfa8e" stroke-width="0.85" opacity="1"/>
<path d="M561.34 403.78L558.26 408.4M558.26 403.78L561.34 403.78M558.26 408.4L561.34 408.4M563.76 405.32L563.32 405.54L562.88 405.98L562.66 406.64L562.66 407.08L562.88 407.74L563.32 408.18L563.76 408.4L564.42 408.4L564.86 408.18L565.3 407.74L565.52 407.08L565.52 406.64L565.3 405.98L564.86 405.54L564.42 405.32L563.76 405.32M567.94 405.32L567.5 405.54L567.06 405.98L566.84 406.64L566.84 407.08L567.06 407.74L567.5 408.18L567.94 408.4L568.6 408.4L569.04 408.18L569.48 407.74L569.7 407.08L569.7 406.64L569.48 405.98L569.04 405.54L568.6 405.32L567.94 405.32M571.24 405.32L571.24 408.4M571.24 406.2L571.9 405.54L572.34 405.32L573 405.32L573.44 405.54L573.66 406.2L573.66 408.4M573.66 406.2L574.32 405.54L574.76 405.32L575.42 405.32L575.86 405.54L576.08 406.2L576.08 408.4M583.78 405.98L583.34 405.54L582.9 405.32L582.24 405.32L581.8 405.54L581.36 405.98L581.14 406.64L581.14 407.08L581.36 407.74L581.8 408.18L582.24 408.4L582.9 408.4L583.34 408.18L583.78 407.74M585.32 403.78L585.32 408.4M585.32 406.2L585.98 405.54L586.42 405.32L587.08 405.32L587.52 405.54L587.74 406.2L587.74 408.4M591.92 405.32L591.92 408.4M591.92 405.98L591.48 405.54L591.04 405.32L590.38 405.32L589.94 405.54L589.5 405.98L589.28 406.64L589.28 407.08L589.5 407.74L589.94 408.18L590.38 408.4L591.04 408.4L591.48 408.18L591.92 407.74M593.68 405.32L593.68 408.4M593.68 406.2L594.34 405.54L594.78 405.32L595.44 405.32L595.88 405.54L596.1 406.2L596.1 408.4M600.28 405.32L600.28 408.84L600.06 409.5L599.84 409.72L599.4 409.94L598.74 409.94L598.3 409.72M600.28 405.98L599.84 405.54L599.4 405.32L598.74 405.32L598.3 405.54L597.86 405.98L597.64 406.64L597.64 407.08L597.86 407.74L598.3 408.18L598.74 408.4L599.4 408.4L599.84 408.18L600.28 407.74M601.82 406.64L604.46 406.64L604.46 406.2L604.24 405.76L604.02 405.54L603.58 405.32L602.92 405.32L602.48 405.54L602.04 405.98L601.82 406.64L601.82 407.08L602.04 407.74L602.48 408.18L602.92 408.4L603.58 408.4L604.02 408.18L604.46 407.74M606.22 405.32L606 405.54L606.22 405.76L606.44 405.54L606.22 405.32M606.22 407.96L606 408.18L606.22 408.4L606.44 408.18L606.22 407.96M612.82 403.78L612.16 404L611.72 404.66L611.5 405.76L611.5 406.42L611.72 407.52L612.16 408.18L612.82 408.4L613.26 408.4L613.92 408.18L614.36 407.52L614.58 406.42L614.58 405.76L614.36 404.66L613.92 404L613.26 403.78L612.82 403.78M616.34 407.96L616.12 408.18L616.34 408.4L616.56 408.18L616.34 407.96M619.42 403.78L618.76 404L618.32 404.66L618.1 405.76L618.1 406.42L618.32 407.52L618.76 408.18L619.42 408.4L619.86 408.4L620.52 408.18L620.96 407.52L621.18 406.42L621.18 405.76L620.96 404.66L620.52 404L619.86 403.78L619.42 403.78M623.82 403.78L623.16 404L622.72 404.66L622.5 405.76L622.5 406.42L622.72 407.52L623.16 408.18L623.82 408.4L624.26 408.4L624.92 408.18L625.36 407.52L625.58 406.42L625.58 405.76L625.36 404.66L624.92 404L624.26 403.78L623.82 403.78M628.22 403.78L627.56 404L627.12 404.66L626.9 405.76L626.9 406.42L627.12 407.52L627.56 408.18L628.22 408.4L628.66 408.4L629.32 408.18L629.76 407.52L629.98 406.42L629.98 405.76L629.76 404.66L629.32 404L628.66 403.78L628.22 403.78M632.62 403.78L631.96 404L631.52 404.66L631.3 405.76L631.3 406.42L631.52 407.52L631.96 408.18L632.62 408.4L633.06 408.4L633.72 408.18L634.16 407.52L634.38 406.42L634.38 405.76L634.16 404.66L633.72 404L633.06 403.78L632.62 403.78M637.02 403.78L636.36 404L635.92 404.66L635.7 405.76L635.7 406.42L635.92 407.52L636.36 408.18L637.02 408.4L637.46 408.4L638.12 408.18L638.56 407.52L638.78 406.42L638.78 405.76L638.56 404.66L638.12 404L637.46 403.78L637.02 403.78" stroke="#3dfa8e" stroke-width="0.85" opacity="1"/>
<path d="M650.28 394.78L650.28 399.4M650.28 394.78L652.26 394.78L652.92 395L653.14 395.22L653.36 395.66L653.36 396.32L653.14 396.76L652.92 396.98L652.26 397.2L650.28 397.2M655.78 396.32L655.34 396.54L654.9 396.98L654.68 397.64L654.68 398.08L654.9 398.74L655.34 399.18L655.78 399.4L656.44 399.4L656.88 399.18L657.32 398.74L657.54 398.08L657.54 397.64L657.32 396.98L656.88 396.54L656.44 396.32L655.78 396.32M661.28 396.98L661.06 396.54L660.4 396.32L659.74 396.32L659.08 396.54L658.86 396.98L659.08 397.42L659.52 397.64L660.62 397.86L661.06 398.08L661.28 398.52L661.28 398.74L661.06 399.18L660.4 399.4L659.74 399.4L659.08 399.18L658.86 398.74M662.6 394.78L662.82 395L663.04 394.78L662.82 394.56L662.6 394.78M662.82 396.32L662.82 399.4M664.8 394.78L664.8 398.52L665.02 399.18L665.46 399.4L665.9 399.4M664.14 396.32L665.68 396.32M667 394.78L667.22 395L667.44 394.78L667.22 394.56L667 394.78M667.22 396.32L667.22 399.4M669.86 396.32L669.42 396.54L668.98 396.98L668.76 397.64L668.76 398.08L668.98 398.74L669.42 399.18L669.86 399.4L670.52 399.4L670.96 399.18L671.4 398.74L671.62 398.08L671.62 397.64L671.4 396.98L670.96 396.54L670.52 396.32L669.86 396.32M673.16 396.32L673.16 399.4M673.16 397.2L673.82 396.54L674.26 396.32L674.92 396.32L675.36 396.54L675.58 397.2L675.58 399.4M683.28 396.98L682.84 396.54L682.4 396.32L681.74 396.32L681.3 396.54L680.86 396.98L680.64 397.64L680.64 398.08L680.86 398.74L681.3 399.18L681.74 399.4L682.4 399.4L682.84 399.18L683.28 398.74M684.82 394.78L684.82 399.4M684.82 397.2L685.48 396.54L685.92 396.32L686.58 396.32L687.02 396.54L687.24 397.2L687.24 399.4M691.42 396.32L691.42 399.4M691.42 396.98L690.98 396.54L690.54 396.32L689.88 396.32L689.44 396.54L689 396.98L688.78 397.64L688.78 398.08L689 398.74L689.44 399.18L689.88 399.4L690.54 399.4L690.98 399.18L691.42 398.74M693.18 396.32L693.18 399.4M693.18 397.2L693.84 396.54L694.28 396.32L694.94 396.32L695.38 396.54L695.6 397.2L695.6 399.4M699.78 396.32L699.78 399.84L699.56 400.5L699.34 400.72L698.9 400.94L698.24 400.94L697.8 400.72M699.78 396.98L699.34 396.54L698.9 396.32L698.24 396.32L697.8 396.54L697.36 396.98L697.14 397.64L697.14 398.08L697.36 398.74L697.8 399.18L698.24 399.4L698.9 399.4L699.34 399.18L699.78 398.74M701.32 397.64L703.96 397.64L703.96 397.2L703.74 396.76L703.52 396.54L703.08 396.32L702.42 396.32L701.98 396.54L701.54 396.98L701.32 397.64L701.32 398.08L701.54 398.74L701.98 399.18L702.42 399.4L703.08 399.4L703.52 399.18L703.96 398.74M705.72 396.32L705.5 396.54L705.72 396.76L705.94 396.54L705.72 396.32M705.72 398.96L705.5 399.18L705.72 399.4L705.94 399.18L705.72 398.96M712.32 394.78L711.66 395L711.22 395.66L711 396.76L711 397.42L711.22 398.52L711.66 399.18L712.32 399.4L712.76 399.4L713.42 399.18L713.86 398.52L714.08 397.42L714.08 396.76L713.86 395.66L713.42 395L712.76 394.78L712.32 394.78M715.84 398.96L715.62 399.18L715.84 399.4L716.06 399.18L715.84 398.96M718.92 394.78L718.26 395L717.82 395.66L717.6 396.76L717.6 397.42L717.82 398.52L718.26 399.18L718.92 399.4L719.36 399.4L720.02 399.18L720.46 398.52L720.68 397.42L720.68 396.76L720.46 395.66L720.02 395L719.36 394.78L718.92 394.78M723.32 394.78L722.66 395L722.22 395.66L722 396.76L722 397.42L722.22 398.52L722.66 399.18L723.32 399.4L723.76 399.4L724.42 399.18L724.86 398.52L725.08 397.42L725.08 396.76L724.86 395.66L724.42 395L723.76 394.78L723.32 394.78M729.48 394.78L727.28 399.4M726.4 394.78L729.48 394.78" stroke="#3dfa8e" stroke-width="0.85" opacity="1"/>
<path d="M650.28 403.78L650.28 408.4M650.28 403.78L653.14 403.78M650.28 405.98L652.04 405.98M655.12 405.32L654.68 405.54L654.24 405.98L654.02 406.64L654.02 407.08L654.24 407.74L654.68 408.18L655.12 408.4L655.78 408.4L656.22 408.18L656.66 407.74L656.88 407.08L656.88 406.64L656.66 405.98L656.22 405.54L655.78 405.32L655.12 405.32M660.84 405.98L660.4 405.54L659.96 405.32L659.3 405.32L658.86 405.54L658.42 405.98L658.2 406.64L658.2 407.08L658.42 407.74L658.86 408.18L659.3 408.4L659.96 408.4L660.4 408.18L660.84 407.74M662.38 405.32L662.38 407.52L662.6 408.18L663.04 408.4L663.7 408.4L664.14 408.18L664.8 407.52M664.8 405.32L664.8 408.4M668.76 405.98L668.54 405.54L667.88 405.32L667.22 405.32L666.56 405.54L666.34 405.98L666.56 406.42L667 406.64L668.1 406.86L668.54 407.08L668.76 407.52L668.76 407.74L668.54 408.18L667.88 408.4L667.22 408.4L666.56 408.18L666.34 407.74M676.24 405.98L675.8 405.54L675.36 405.32L674.7 405.32L674.26 405.54L673.82 405.98L673.6 406.64L673.6 407.08L673.82 407.74L674.26 408.18L674.7 408.4L675.36 408.4L675.8 408.18L676.24 407.74M677.78 403.78L677.78 408.4M677.78 406.2L678.44 405.54L678.88 405.32L679.54 405.32L679.98 405.54L680.2 406.2L680.2 408.4M684.38 405.32L684.38 408.4M684.38 405.98L683.94 405.54L683.5 405.32L682.84 405.32L682.4 405.54L681.96 405.98L681.74 406.64L681.74 407.08L681.96 407.74L682.4 408.18L682.84 408.4L683.5 408.4L683.94 408.18L684.38 407.74M686.14 405.32L686.14 408.4M686.14 406.2L686.8 405.54L687.24 405.32L687.9 405.32L688.34 405.54L688.56 406.2L688.56 408.4M692.74 405.32L692.74 408.84L692.52 409.5L692.3 409.72L691.86 409.94L691.2 409.94L690.76 409.72M692.74 405.98L692.3 405.54L691.86 405.32L691.2 405.32L690.76 405.54L690.32 405.98L690.1 406.64L690.1 407.08L690.32 407.74L690.76 408.18L691.2 408.4L691.86 408.4L692.3 408.18L692.74 407.74M694.28 406.64L696.92 406.64L696.92 406.2L696.7 405.76L696.48 405.54L696.04 405.32L695.38 405.32L694.94 405.54L694.5 405.98L694.28 406.64L694.28 407.08L694.5 407.74L694.94 408.18L695.38 408.4L696.04 408.4L696.48 408.18L696.92 407.74M698.68 405.32L698.46 405.54L698.68 405.76L698.9 405.54L698.68 405.32M698.68 407.96L698.46 408.18L698.68 408.4L698.9 408.18L698.68 407.96M705.28 403.78L704.62 404L704.18 404.66L703.96 405.76L703.96 406.42L704.18 407.52L704.62 408.18L705.28 408.4L705.72 408.4L706.38 408.18L706.82 407.52L707.04 406.42L707.04 405.76L706.82 404.66L706.38 404L705.72 403.78L705.28 403.78M708.8 407.96L708.58 408.18L708.8 408.4L709.02 408.18L708.8 407.96M711.88 403.78L711.22 404L710.78 404.66L710.56 405.76L710.56 406.42L710.78 407.52L711.22 408.18L711.88 408.4L712.32 408.4L712.98 408.18L713.42 407.52L713.64 406.42L713.64 405.76L713.42 404.66L712.98 404L712.32 403.78L711.88 403.78M716.28 403.78L715.62 404L715.18 404.66L714.96 405.76L714.96 406.42L715.18 407.52L715.62 408.18L716.28 408.4L716.72 408.4L717.38 408.18L717.82 407.52L718.04 406.42L718.04 405.76L717.82 404.66L717.38 404L716.72 403.78L716.28 403.78M720.68 403.78L720.02 404L719.58 404.66L719.36 405.76L719.36 406.42L719.58 407.52L720.02 408.18L720.68 408.4L721.12 408.4L721.78 408.18L722.22 407.52L722.44 406.42L722.44 405.76L722.22 404.66L721.78 404L721.12 403.78L720.68 403.78M725.08 403.78L724.42 404L723.98 404.66L723.76 405.76L723.76 406.42L723.98 407.52L724.42 408.18L725.08 408.4L725.52 408.4L726.18 408.18L726.62 407.52L726.84 406.42L726.84 405.76L726.62 404.66L726.18 404L725.52 403.78L725.08 403.78M729.48 403.78L728.82 404L728.38 404.66L728.16 405.76L728.16 406.42L728.38 407.52L728.82 408.18L729.48 408.4L729.92 408.4L730.58 408.18L731.02 407.52L731.24 406.42L731.24 405.76L731.02 404.66L730.58 404L729.92 403.78L729.48 403.78" stroke="#3dfa8e" stroke-width="0.85" opacity="1"/>
<path d="M540.58 61.11L542.03 67.2M543.48 61.11L542.03 67.2M543.48 61.11L544.93 67.2M546.38 61.11L544.93 67.2" stroke="#e4e4e4" stroke-width="1.4" opacity="1"/>
<path d="M545.47 132.91L542.53 139M542.53 132.91L545.47 132.91M542.53 139L545.47 139" stroke="#e4e4e4" stroke-width="1.05" opacity="1"/>
<path d="M543.67 147.34L543.23 147.63L542.79 148.21L542.57 149.08L542.57 149.66L542.79 150.53L543.23 151.11L543.67 151.4L544.33 151.4L544.77 151.11L545.21 150.53L545.43 149.66L545.43 149.08L545.21 148.21L544.77 147.63L544.33 147.34L543.67 147.34" stroke="#e4e4e4" stroke-width="1.05" opacity="1"/>
<path d="M543.67 159.34L543.23 159.63L542.79 160.21L542.57 161.08L542.57 161.66L542.79 162.53L543.23 163.11L543.67 163.4L544.33 163.4L544.77 163.11L545.21 162.53L545.43 161.66L545.43 161.08L545.21 160.21L544.77 159.63L544.33 159.34L543.67 159.34" stroke="#e4e4e4" stroke-width="1.05" opacity="1"/>
<path d="M541.12 171.44L541.12 175.5M541.12 172.6L541.82 171.73L542.29 171.44L543 171.44L543.47 171.73L543.7 172.6L543.7 175.5M543.7 172.6L544.41 171.73L544.88 171.44L545.58 171.44L546.05 171.73L546.29 172.6L546.29 175.5" stroke="#e4e4e4" stroke-width="1.05" opacity="1"/>
<path d="M544.1 243.91L544.1 250M542.56 243.91L545.64 243.91" stroke="#e4e4e4" stroke-width="1.05" opacity="1"/>
<path d="M551.43 255.71L550.92 256L550.58 256.87L550.41 258.32L550.41 259.19L550.58 260.64L550.92 261.51L551.43 261.8L551.77 261.8L552.28 261.51L552.62 260.64L552.79 259.19L552.79 258.32L552.62 256.87L552.28 256L551.77 255.71L551.43 255.71" stroke="#e4e4e4" stroke-width="1.05" opacity="1"/>
<path d="M630.97 255.71L630.97 261.8M630.97 255.71L633.44 255.71M630.97 258.61L632.49 258.61" stroke="#e4e4e4" stroke-width="1.05" opacity="1"/>
<path d="M639.42 257.74L639.04 258.03L638.66 258.61L638.47 259.48L638.47 260.06L638.66 260.93L639.04 261.51L639.42 261.8L639.99 261.8L640.37 261.51L640.75 260.93L640.94 260.06L640.94 259.48L640.75 258.61L640.37 258.03L639.99 257.74L639.42 257.74" stroke="#e4e4e4" stroke-width="1.05" opacity="1"/>
<path d="M648.74 258.61L648.36 258.03L647.98 257.74L647.41 257.74L647.03 258.03L646.65 258.61L646.46 259.48L646.46 260.06L646.65 260.93L647.03 261.51L647.41 261.8L647.98 261.8L648.36 261.51L648.74 260.93" stroke="#e4e4e4" stroke-width="1.05" opacity="1"/>
<path d="M654.21 257.74L654.21 260.64L654.4 261.51L654.78 261.8L655.35 261.8L655.73 261.51L656.3 260.64M656.3 257.74L656.3 261.8" stroke="#e4e4e4" stroke-width="1.05" opacity="1"/>
<path d="M663.75 258.61L663.56 258.03L662.99 257.74L662.42 257.74L661.85 258.03L661.66 258.61L661.85 259.19L662.23 259.48L663.18 259.77L663.56 260.06L663.75 260.64L663.75 260.93L663.56 261.51L662.99 261.8L662.42 261.8L661.85 261.51L661.66 260.93" stroke="#e4e4e4" stroke-width="1.05" opacity="1"/>
</g>
<!-- window controls -->
<g fill="none" stroke="#cecece">
<path d="M744 19.5H754" stroke-width="1"/>
<path d="M760.5 12.5V19.5H769.5V12.5" stroke-width="1"/><path d="M760 12H770" stroke-width="2"/>
<path d="M776.7 11.5L785.3 20M785.3 11.5L776.7 20" stroke-width="1.3"/>
</g>
</svg>
</body></html>
